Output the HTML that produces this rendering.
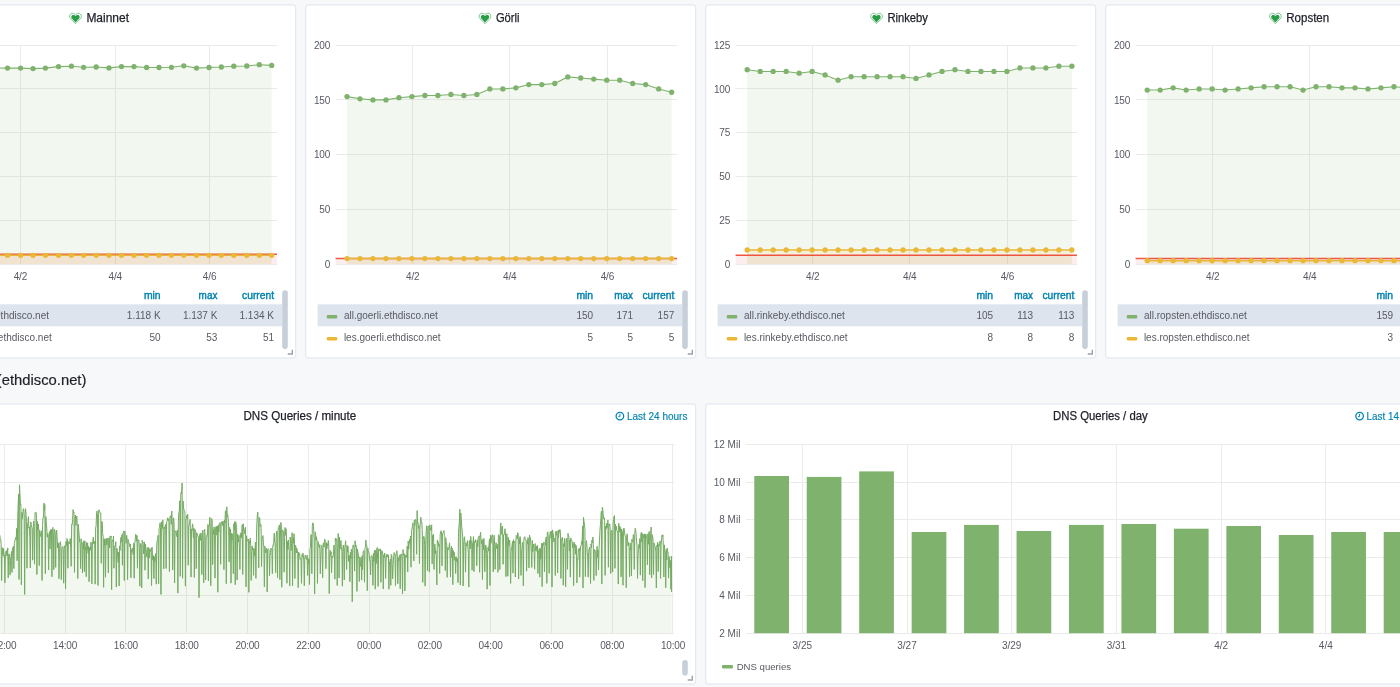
<!DOCTYPE html>
<html><head><meta charset="utf-8"><style>
html,body{margin:0;padding:0}
body{width:1400px;height:687px;overflow:hidden;background:#f7f8fa;position:relative;font-family:"Liberation Sans",sans-serif}
.p{position:absolute;background:#fff;border:1px solid #dde4ed;border-radius:3px;box-sizing:border-box;transform:translate(0.2px,0.5px)}
svg{position:absolute;left:0;top:0;font-family:"Liberation Sans",sans-serif;will-change:transform}
</style></head><body>
<div class="p" style="left:-95px;top:4px;width:391px;height:354px"></div>
<div class="p" style="left:305px;top:4px;width:391px;height:354px"></div>
<div class="p" style="left:705px;top:4px;width:391px;height:354px"></div>
<div class="p" style="left:1105px;top:4px;width:391px;height:354px"></div>
<div class="p" style="left:-95px;top:403px;width:791px;height:281px"></div>
<div class="p" style="left:705px;top:403px;width:791px;height:281px"></div>
<svg width="1400" height="687" viewBox="0 0 1400 687">
<line x1="-56" y1="264.5" x2="277" y2="264.5" stroke="#ebebeb" stroke-width="1"/>
<line x1="-56" y1="220.5" x2="277" y2="220.5" stroke="#ebebeb" stroke-width="1"/>
<line x1="-56" y1="176.5" x2="277" y2="176.5" stroke="#ebebeb" stroke-width="1"/>
<line x1="-56" y1="132.5" x2="277" y2="132.5" stroke="#ebebeb" stroke-width="1"/>
<line x1="-56" y1="88.5" x2="277" y2="88.5" stroke="#ebebeb" stroke-width="1"/>
<line x1="-56" y1="45.5" x2="277" y2="45.5" stroke="#ebebeb" stroke-width="1"/>
<line x1="20.5" y1="45.2" x2="20.5" y2="264" stroke="#ebebeb" stroke-width="1"/>
<line x1="115.5" y1="45.2" x2="115.5" y2="264" stroke="#ebebeb" stroke-width="1"/>
<line x1="209.5" y1="45.2" x2="209.5" y2="264" stroke="#ebebeb" stroke-width="1"/>
<rect x="-56" y="254.2" width="333" height="9.8" fill="rgba(234,112,112,0.12)"/>
<path d="M-42.8,68 L-30.22,68.4 L-17.64,67.6 L-5.06,68 L7.5,68.1 L20.6,68.1 L33,68.6 L45.4,68.1 L58.5,66.6 L71.4,66.2 L83.6,67.3 L96.2,67 L109,67.9 L121.5,66.6 L134,66.6 L146.6,67.5 L159,67.5 L171.4,67.3 L183.8,65.8 L196.5,68.1 L209,67.5 L221.3,67 L233.8,66.2 L246.8,66 L259.3,64.7 L271.7,65.4 L271.7,264 L-42.8,264 Z" fill="#7eb26d" fill-opacity="0.1"/>
<rect x="-42.8" y="255.3" width="314.5" height="8.7" fill="#eab839" fill-opacity="0.1"/>
<line x1="-56" y1="254.2" x2="277" y2="254.2" stroke="rgba(237,46,24,0.8)" stroke-width="1.6"/>
<path d="M-42.8,68 L-30.22,68.4 L-17.64,67.6 L-5.06,68 L7.5,68.1 L20.6,68.1 L33,68.6 L45.4,68.1 L58.5,66.6 L71.4,66.2 L83.6,67.3 L96.2,67 L109,67.9 L121.5,66.6 L134,66.6 L146.6,67.5 L159,67.5 L171.4,67.3 L183.8,65.8 L196.5,68.1 L209,67.5 L221.3,67 L233.8,66.2 L246.8,66 L259.3,64.7 L271.7,65.4" fill="none" stroke="#7eb26d" stroke-width="1.1"/>
<circle cx="-42.8" cy="68" r="2.65" fill="#7eb26d"/>
<circle cx="-30.22" cy="68.4" r="2.65" fill="#7eb26d"/>
<circle cx="-17.64" cy="67.6" r="2.65" fill="#7eb26d"/>
<circle cx="-5.06" cy="68" r="2.65" fill="#7eb26d"/>
<circle cx="7.5" cy="68.1" r="2.65" fill="#7eb26d"/>
<circle cx="20.6" cy="68.1" r="2.65" fill="#7eb26d"/>
<circle cx="33" cy="68.6" r="2.65" fill="#7eb26d"/>
<circle cx="45.4" cy="68.1" r="2.65" fill="#7eb26d"/>
<circle cx="58.5" cy="66.6" r="2.65" fill="#7eb26d"/>
<circle cx="71.4" cy="66.2" r="2.65" fill="#7eb26d"/>
<circle cx="83.6" cy="67.3" r="2.65" fill="#7eb26d"/>
<circle cx="96.2" cy="67" r="2.65" fill="#7eb26d"/>
<circle cx="109" cy="67.9" r="2.65" fill="#7eb26d"/>
<circle cx="121.5" cy="66.6" r="2.65" fill="#7eb26d"/>
<circle cx="134" cy="66.6" r="2.65" fill="#7eb26d"/>
<circle cx="146.6" cy="67.5" r="2.65" fill="#7eb26d"/>
<circle cx="159" cy="67.5" r="2.65" fill="#7eb26d"/>
<circle cx="171.4" cy="67.3" r="2.65" fill="#7eb26d"/>
<circle cx="183.8" cy="65.8" r="2.65" fill="#7eb26d"/>
<circle cx="196.5" cy="68.1" r="2.65" fill="#7eb26d"/>
<circle cx="209" cy="67.5" r="2.65" fill="#7eb26d"/>
<circle cx="221.3" cy="67" r="2.65" fill="#7eb26d"/>
<circle cx="233.8" cy="66.2" r="2.65" fill="#7eb26d"/>
<circle cx="246.8" cy="66" r="2.65" fill="#7eb26d"/>
<circle cx="259.3" cy="64.7" r="2.65" fill="#7eb26d"/>
<circle cx="271.7" cy="65.4" r="2.65" fill="#7eb26d"/>
<line x1="-42.8" y1="255.3" x2="271.7" y2="255.3" stroke="#eab839" stroke-width="1.4"/>
<circle cx="-42.8" cy="255.3" r="2.65" fill="#eab839"/>
<circle cx="-30.22" cy="255.3" r="2.65" fill="#eab839"/>
<circle cx="-17.64" cy="255.3" r="2.65" fill="#eab839"/>
<circle cx="-5.06" cy="255.3" r="2.65" fill="#eab839"/>
<circle cx="7.5" cy="255.3" r="2.65" fill="#eab839"/>
<circle cx="20.6" cy="255.3" r="2.65" fill="#eab839"/>
<circle cx="33" cy="255.3" r="2.65" fill="#eab839"/>
<circle cx="45.4" cy="255.3" r="2.65" fill="#eab839"/>
<circle cx="58.5" cy="255.3" r="2.65" fill="#eab839"/>
<circle cx="71.4" cy="255.3" r="2.65" fill="#eab839"/>
<circle cx="83.6" cy="255.3" r="2.65" fill="#eab839"/>
<circle cx="96.2" cy="255.3" r="2.65" fill="#eab839"/>
<circle cx="109" cy="255.3" r="2.65" fill="#eab839"/>
<circle cx="121.5" cy="255.3" r="2.65" fill="#eab839"/>
<circle cx="134" cy="255.3" r="2.65" fill="#eab839"/>
<circle cx="146.6" cy="255.3" r="2.65" fill="#eab839"/>
<circle cx="159" cy="255.3" r="2.65" fill="#eab839"/>
<circle cx="171.4" cy="255.3" r="2.65" fill="#eab839"/>
<circle cx="183.8" cy="255.3" r="2.65" fill="#eab839"/>
<circle cx="196.5" cy="255.3" r="2.65" fill="#eab839"/>
<circle cx="209" cy="255.3" r="2.65" fill="#eab839"/>
<circle cx="221.3" cy="255.3" r="2.65" fill="#eab839"/>
<circle cx="233.8" cy="255.3" r="2.65" fill="#eab839"/>
<circle cx="246.8" cy="255.3" r="2.65" fill="#eab839"/>
<circle cx="259.3" cy="255.3" r="2.65" fill="#eab839"/>
<circle cx="271.7" cy="255.3" r="2.65" fill="#eab839"/>
<text x="-69.8" y="267.6" font-size="10" text-anchor="end" fill="#585a62" font-weight="400" letter-spacing="-0.15">0</text>
<text x="-69.8" y="223.84" font-size="10" text-anchor="end" fill="#585a62" font-weight="400" letter-spacing="-0.15">250</text>
<text x="-69.8" y="180.08" font-size="10" text-anchor="end" fill="#585a62" font-weight="400" letter-spacing="-0.15">500</text>
<text x="-69.8" y="136.32" font-size="10" text-anchor="end" fill="#585a62" font-weight="400" letter-spacing="-0.15">750</text>
<text x="-69.8" y="92.56" font-size="10" text-anchor="end" fill="#585a62" font-weight="400" letter-spacing="-0.15">1.00 K</text>
<text x="-69.8" y="48.8" font-size="10" text-anchor="end" fill="#585a62" font-weight="400" letter-spacing="-0.15">1.25 K</text>
<text x="20.4" y="279.5" font-size="10" text-anchor="middle" fill="#585a62" font-weight="400" letter-spacing="-0.15">4/2</text>
<text x="115.3" y="279.5" font-size="10" text-anchor="middle" fill="#585a62" font-weight="400" letter-spacing="-0.15">4/4</text>
<text x="209.6" y="279.5" font-size="10" text-anchor="middle" fill="#585a62" font-weight="400" letter-spacing="-0.15">4/6</text>
<rect x="-82.4" y="304.3" width="364.4" height="22" fill="#dde4ed"/>
<text x="160.6" y="298.7" font-size="10" text-anchor="end" fill="#0083b3" stroke="#0083b3" stroke-width="0.4" textLength="16.7" lengthAdjust="spacingAndGlyphs">min</text>
<text x="217.4" y="298.7" font-size="10" text-anchor="end" fill="#0083b3" stroke="#0083b3" stroke-width="0.4" textLength="18.8" lengthAdjust="spacingAndGlyphs">max</text>
<text x="274" y="298.7" font-size="10" text-anchor="end" fill="#0083b3" stroke="#0083b3" stroke-width="0.4" textLength="31.9" lengthAdjust="spacingAndGlyphs">current</text>
<rect x="-73.2" y="315" width="10.4" height="3.4" rx="1" fill="#7eb26d"/>
<text x="-56.1" y="318.6" font-size="10" text-anchor="start" fill="#585a62" font-weight="400">all.mainnet.ethdisco.net</text>
<text x="160.6" y="318.6" font-size="10" text-anchor="end" fill="#585a62" font-weight="400">1.118 K</text>
<text x="217.4" y="318.6" font-size="10" text-anchor="end" fill="#585a62" font-weight="400">1.137 K</text>
<text x="274" y="318.6" font-size="10" text-anchor="end" fill="#585a62" font-weight="400">1.134 K</text>
<rect x="-73.2" y="337" width="10.4" height="3.4" rx="1" fill="#eab839"/>
<text x="-56.1" y="340.6" font-size="10" text-anchor="start" fill="#585a62" font-weight="400">les.mainnet.ethdisco.net</text>
<text x="160.6" y="340.6" font-size="10" text-anchor="end" fill="#585a62" font-weight="400">50</text>
<text x="217.4" y="340.6" font-size="10" text-anchor="end" fill="#585a62" font-weight="400">53</text>
<text x="274" y="340.6" font-size="10" text-anchor="end" fill="#585a62" font-weight="400">51</text>
<rect x="282.2" y="290.3" width="5.6" height="58.7" rx="2.8" fill="#c7d0d9"/>
<path d="M291.6,349.8 h1.4 v4.9 h-5.3 v-1.4 h3.9 Z" fill="#9aa3ad"/>
<line x1="335.6" y1="264.5" x2="677" y2="264.5" stroke="#ebebeb" stroke-width="1"/>
<line x1="335.6" y1="209.5" x2="677" y2="209.5" stroke="#ebebeb" stroke-width="1"/>
<line x1="335.6" y1="154.5" x2="677" y2="154.5" stroke="#ebebeb" stroke-width="1"/>
<line x1="335.6" y1="99.5" x2="677" y2="99.5" stroke="#ebebeb" stroke-width="1"/>
<line x1="335.6" y1="45.5" x2="677" y2="45.5" stroke="#ebebeb" stroke-width="1"/>
<line x1="412.5" y1="45.2" x2="412.5" y2="264" stroke="#ebebeb" stroke-width="1"/>
<line x1="509.5" y1="45.2" x2="509.5" y2="264" stroke="#ebebeb" stroke-width="1"/>
<line x1="607.5" y1="45.2" x2="607.5" y2="264" stroke="#ebebeb" stroke-width="1"/>
<rect x="335.6" y="258.53" width="341.4" height="5.47" fill="rgba(234,112,112,0.12)"/>
<path d="M347,96.62 L359.99,98.81 L372.97,99.9 L385.96,99.9 L398.95,97.71 L411.94,96.62 L424.92,95.52 L437.91,95.52 L450.9,94.43 L463.88,95.52 L476.87,94.43 L489.86,88.96 L502.84,88.96 L515.83,87.87 L528.82,84.58 L541.81,84.58 L554.79,83.49 L567.78,76.93 L580.77,78.02 L593.75,79.11 L606.74,80.21 L619.73,80.21 L632.71,83.49 L645.7,84.58 L658.69,88.96 L671.67,92.24 L671.67,264 L347,264 Z" fill="#7eb26d" fill-opacity="0.1"/>
<rect x="347" y="258.53" width="324.67" height="5.47" fill="#eab839" fill-opacity="0.1"/>
<line x1="335.6" y1="258.53" x2="677" y2="258.53" stroke="rgba(237,46,24,0.8)" stroke-width="1.6"/>
<path d="M347,96.62 L359.99,98.81 L372.97,99.9 L385.96,99.9 L398.95,97.71 L411.94,96.62 L424.92,95.52 L437.91,95.52 L450.9,94.43 L463.88,95.52 L476.87,94.43 L489.86,88.96 L502.84,88.96 L515.83,87.87 L528.82,84.58 L541.81,84.58 L554.79,83.49 L567.78,76.93 L580.77,78.02 L593.75,79.11 L606.74,80.21 L619.73,80.21 L632.71,83.49 L645.7,84.58 L658.69,88.96 L671.67,92.24" fill="none" stroke="#7eb26d" stroke-width="1.1"/>
<circle cx="347" cy="96.62" r="2.65" fill="#7eb26d"/>
<circle cx="359.99" cy="98.81" r="2.65" fill="#7eb26d"/>
<circle cx="372.97" cy="99.9" r="2.65" fill="#7eb26d"/>
<circle cx="385.96" cy="99.9" r="2.65" fill="#7eb26d"/>
<circle cx="398.95" cy="97.71" r="2.65" fill="#7eb26d"/>
<circle cx="411.94" cy="96.62" r="2.65" fill="#7eb26d"/>
<circle cx="424.92" cy="95.52" r="2.65" fill="#7eb26d"/>
<circle cx="437.91" cy="95.52" r="2.65" fill="#7eb26d"/>
<circle cx="450.9" cy="94.43" r="2.65" fill="#7eb26d"/>
<circle cx="463.88" cy="95.52" r="2.65" fill="#7eb26d"/>
<circle cx="476.87" cy="94.43" r="2.65" fill="#7eb26d"/>
<circle cx="489.86" cy="88.96" r="2.65" fill="#7eb26d"/>
<circle cx="502.84" cy="88.96" r="2.65" fill="#7eb26d"/>
<circle cx="515.83" cy="87.87" r="2.65" fill="#7eb26d"/>
<circle cx="528.82" cy="84.58" r="2.65" fill="#7eb26d"/>
<circle cx="541.81" cy="84.58" r="2.65" fill="#7eb26d"/>
<circle cx="554.79" cy="83.49" r="2.65" fill="#7eb26d"/>
<circle cx="567.78" cy="76.93" r="2.65" fill="#7eb26d"/>
<circle cx="580.77" cy="78.02" r="2.65" fill="#7eb26d"/>
<circle cx="593.75" cy="79.11" r="2.65" fill="#7eb26d"/>
<circle cx="606.74" cy="80.21" r="2.65" fill="#7eb26d"/>
<circle cx="619.73" cy="80.21" r="2.65" fill="#7eb26d"/>
<circle cx="632.71" cy="83.49" r="2.65" fill="#7eb26d"/>
<circle cx="645.7" cy="84.58" r="2.65" fill="#7eb26d"/>
<circle cx="658.69" cy="88.96" r="2.65" fill="#7eb26d"/>
<circle cx="671.67" cy="92.24" r="2.65" fill="#7eb26d"/>
<line x1="347" y1="258.53" x2="671.67" y2="258.53" stroke="#eab839" stroke-width="1.4"/>
<circle cx="347" cy="258.53" r="2.65" fill="#eab839"/>
<circle cx="359.99" cy="258.53" r="2.65" fill="#eab839"/>
<circle cx="372.97" cy="258.53" r="2.65" fill="#eab839"/>
<circle cx="385.96" cy="258.53" r="2.65" fill="#eab839"/>
<circle cx="398.95" cy="258.53" r="2.65" fill="#eab839"/>
<circle cx="411.94" cy="258.53" r="2.65" fill="#eab839"/>
<circle cx="424.92" cy="258.53" r="2.65" fill="#eab839"/>
<circle cx="437.91" cy="258.53" r="2.65" fill="#eab839"/>
<circle cx="450.9" cy="258.53" r="2.65" fill="#eab839"/>
<circle cx="463.88" cy="258.53" r="2.65" fill="#eab839"/>
<circle cx="476.87" cy="258.53" r="2.65" fill="#eab839"/>
<circle cx="489.86" cy="258.53" r="2.65" fill="#eab839"/>
<circle cx="502.84" cy="258.53" r="2.65" fill="#eab839"/>
<circle cx="515.83" cy="258.53" r="2.65" fill="#eab839"/>
<circle cx="528.82" cy="258.53" r="2.65" fill="#eab839"/>
<circle cx="541.81" cy="258.53" r="2.65" fill="#eab839"/>
<circle cx="554.79" cy="258.53" r="2.65" fill="#eab839"/>
<circle cx="567.78" cy="258.53" r="2.65" fill="#eab839"/>
<circle cx="580.77" cy="258.53" r="2.65" fill="#eab839"/>
<circle cx="593.75" cy="258.53" r="2.65" fill="#eab839"/>
<circle cx="606.74" cy="258.53" r="2.65" fill="#eab839"/>
<circle cx="619.73" cy="258.53" r="2.65" fill="#eab839"/>
<circle cx="632.71" cy="258.53" r="2.65" fill="#eab839"/>
<circle cx="645.7" cy="258.53" r="2.65" fill="#eab839"/>
<circle cx="658.69" cy="258.53" r="2.65" fill="#eab839"/>
<circle cx="671.67" cy="258.53" r="2.65" fill="#eab839"/>
<text x="330.2" y="267.6" font-size="10" text-anchor="end" fill="#585a62" font-weight="400" letter-spacing="-0.15">0</text>
<text x="330.2" y="212.9" font-size="10" text-anchor="end" fill="#585a62" font-weight="400" letter-spacing="-0.15">50</text>
<text x="330.2" y="158.2" font-size="10" text-anchor="end" fill="#585a62" font-weight="400" letter-spacing="-0.15">100</text>
<text x="330.2" y="103.5" font-size="10" text-anchor="end" fill="#585a62" font-weight="400" letter-spacing="-0.15">150</text>
<text x="330.2" y="48.8" font-size="10" text-anchor="end" fill="#585a62" font-weight="400" letter-spacing="-0.15">200</text>
<text x="412.7" y="279.5" font-size="10" text-anchor="middle" fill="#585a62" font-weight="400" letter-spacing="-0.15">4/2</text>
<text x="509.8" y="279.5" font-size="10" text-anchor="middle" fill="#585a62" font-weight="400" letter-spacing="-0.15">4/4</text>
<text x="607.4" y="279.5" font-size="10" text-anchor="middle" fill="#585a62" font-weight="400" letter-spacing="-0.15">4/6</text>
<rect x="317.6" y="304.3" width="364.4" height="22" fill="#dde4ed"/>
<text x="593.1" y="298.7" font-size="10" text-anchor="end" fill="#0083b3" stroke="#0083b3" stroke-width="0.4" textLength="16.7" lengthAdjust="spacingAndGlyphs">min</text>
<text x="633.1" y="298.7" font-size="10" text-anchor="end" fill="#0083b3" stroke="#0083b3" stroke-width="0.4" textLength="18.8" lengthAdjust="spacingAndGlyphs">max</text>
<text x="674.3" y="298.7" font-size="10" text-anchor="end" fill="#0083b3" stroke="#0083b3" stroke-width="0.4" textLength="31.9" lengthAdjust="spacingAndGlyphs">current</text>
<rect x="326.8" y="315" width="10.4" height="3.4" rx="1" fill="#7eb26d"/>
<text x="343.9" y="318.6" font-size="10" text-anchor="start" fill="#585a62" font-weight="400">all.goerli.ethdisco.net</text>
<text x="593.1" y="318.6" font-size="10" text-anchor="end" fill="#585a62" font-weight="400">150</text>
<text x="633.1" y="318.6" font-size="10" text-anchor="end" fill="#585a62" font-weight="400">171</text>
<text x="674.3" y="318.6" font-size="10" text-anchor="end" fill="#585a62" font-weight="400">157</text>
<rect x="326.8" y="337" width="10.4" height="3.4" rx="1" fill="#eab839"/>
<text x="343.9" y="340.6" font-size="10" text-anchor="start" fill="#585a62" font-weight="400">les.goerli.ethdisco.net</text>
<text x="593.1" y="340.6" font-size="10" text-anchor="end" fill="#585a62" font-weight="400">5</text>
<text x="633.1" y="340.6" font-size="10" text-anchor="end" fill="#585a62" font-weight="400">5</text>
<text x="674.3" y="340.6" font-size="10" text-anchor="end" fill="#585a62" font-weight="400">5</text>
<rect x="682.2" y="290.3" width="5.6" height="58.7" rx="2.8" fill="#c7d0d9"/>
<path d="M691.6,349.8 h1.4 v4.9 h-5.3 v-1.4 h3.9 Z" fill="#9aa3ad"/>
<line x1="735.6" y1="264.5" x2="1077" y2="264.5" stroke="#ebebeb" stroke-width="1"/>
<line x1="735.6" y1="220.5" x2="1077" y2="220.5" stroke="#ebebeb" stroke-width="1"/>
<line x1="735.6" y1="176.5" x2="1077" y2="176.5" stroke="#ebebeb" stroke-width="1"/>
<line x1="735.6" y1="132.5" x2="1077" y2="132.5" stroke="#ebebeb" stroke-width="1"/>
<line x1="735.6" y1="88.5" x2="1077" y2="88.5" stroke="#ebebeb" stroke-width="1"/>
<line x1="735.6" y1="45.5" x2="1077" y2="45.5" stroke="#ebebeb" stroke-width="1"/>
<line x1="812.5" y1="45.2" x2="812.5" y2="264" stroke="#ebebeb" stroke-width="1"/>
<line x1="909.5" y1="45.2" x2="909.5" y2="264" stroke="#ebebeb" stroke-width="1"/>
<line x1="1007.5" y1="45.2" x2="1007.5" y2="264" stroke="#ebebeb" stroke-width="1"/>
<rect x="735.6" y="255.25" width="341.4" height="8.75" fill="rgba(234,112,112,0.12)"/>
<path d="M747.2,69.71 L760.19,71.46 L773.17,71.46 L786.16,71.46 L799.15,73.21 L812.13,71.46 L825.12,74.96 L838.11,80.21 L851.1,76.71 L864.08,76.71 L877.07,76.71 L890.06,76.71 L903.04,76.71 L916.03,78.46 L929.02,74.96 L942.01,71.46 L954.99,69.71 L967.98,71.46 L980.97,71.46 L993.95,71.46 L1006.94,71.46 L1019.93,67.96 L1032.91,67.96 L1045.9,67.96 L1058.89,66.2 L1071.88,66.2 L1071.88,264 L747.2,264 Z" fill="#7eb26d" fill-opacity="0.1"/>
<rect x="747.2" y="250" width="324.67" height="14" fill="#eab839" fill-opacity="0.1"/>
<line x1="735.6" y1="255.25" x2="1077" y2="255.25" stroke="rgba(237,46,24,0.8)" stroke-width="1.6"/>
<path d="M747.2,69.71 L760.19,71.46 L773.17,71.46 L786.16,71.46 L799.15,73.21 L812.13,71.46 L825.12,74.96 L838.11,80.21 L851.1,76.71 L864.08,76.71 L877.07,76.71 L890.06,76.71 L903.04,76.71 L916.03,78.46 L929.02,74.96 L942.01,71.46 L954.99,69.71 L967.98,71.46 L980.97,71.46 L993.95,71.46 L1006.94,71.46 L1019.93,67.96 L1032.91,67.96 L1045.9,67.96 L1058.89,66.2 L1071.88,66.2" fill="none" stroke="#7eb26d" stroke-width="1.1"/>
<circle cx="747.2" cy="69.71" r="2.65" fill="#7eb26d"/>
<circle cx="760.19" cy="71.46" r="2.65" fill="#7eb26d"/>
<circle cx="773.17" cy="71.46" r="2.65" fill="#7eb26d"/>
<circle cx="786.16" cy="71.46" r="2.65" fill="#7eb26d"/>
<circle cx="799.15" cy="73.21" r="2.65" fill="#7eb26d"/>
<circle cx="812.13" cy="71.46" r="2.65" fill="#7eb26d"/>
<circle cx="825.12" cy="74.96" r="2.65" fill="#7eb26d"/>
<circle cx="838.11" cy="80.21" r="2.65" fill="#7eb26d"/>
<circle cx="851.1" cy="76.71" r="2.65" fill="#7eb26d"/>
<circle cx="864.08" cy="76.71" r="2.65" fill="#7eb26d"/>
<circle cx="877.07" cy="76.71" r="2.65" fill="#7eb26d"/>
<circle cx="890.06" cy="76.71" r="2.65" fill="#7eb26d"/>
<circle cx="903.04" cy="76.71" r="2.65" fill="#7eb26d"/>
<circle cx="916.03" cy="78.46" r="2.65" fill="#7eb26d"/>
<circle cx="929.02" cy="74.96" r="2.65" fill="#7eb26d"/>
<circle cx="942.01" cy="71.46" r="2.65" fill="#7eb26d"/>
<circle cx="954.99" cy="69.71" r="2.65" fill="#7eb26d"/>
<circle cx="967.98" cy="71.46" r="2.65" fill="#7eb26d"/>
<circle cx="980.97" cy="71.46" r="2.65" fill="#7eb26d"/>
<circle cx="993.95" cy="71.46" r="2.65" fill="#7eb26d"/>
<circle cx="1006.94" cy="71.46" r="2.65" fill="#7eb26d"/>
<circle cx="1019.93" cy="67.96" r="2.65" fill="#7eb26d"/>
<circle cx="1032.91" cy="67.96" r="2.65" fill="#7eb26d"/>
<circle cx="1045.9" cy="67.96" r="2.65" fill="#7eb26d"/>
<circle cx="1058.89" cy="66.2" r="2.65" fill="#7eb26d"/>
<circle cx="1071.88" cy="66.2" r="2.65" fill="#7eb26d"/>
<line x1="747.2" y1="250" x2="1071.88" y2="250" stroke="#eab839" stroke-width="1.4"/>
<circle cx="747.2" cy="250" r="2.65" fill="#eab839"/>
<circle cx="760.19" cy="250" r="2.65" fill="#eab839"/>
<circle cx="773.17" cy="250" r="2.65" fill="#eab839"/>
<circle cx="786.16" cy="250" r="2.65" fill="#eab839"/>
<circle cx="799.15" cy="250" r="2.65" fill="#eab839"/>
<circle cx="812.13" cy="250" r="2.65" fill="#eab839"/>
<circle cx="825.12" cy="250" r="2.65" fill="#eab839"/>
<circle cx="838.11" cy="250" r="2.65" fill="#eab839"/>
<circle cx="851.1" cy="250" r="2.65" fill="#eab839"/>
<circle cx="864.08" cy="250" r="2.65" fill="#eab839"/>
<circle cx="877.07" cy="250" r="2.65" fill="#eab839"/>
<circle cx="890.06" cy="250" r="2.65" fill="#eab839"/>
<circle cx="903.04" cy="250" r="2.65" fill="#eab839"/>
<circle cx="916.03" cy="250" r="2.65" fill="#eab839"/>
<circle cx="929.02" cy="250" r="2.65" fill="#eab839"/>
<circle cx="942.01" cy="250" r="2.65" fill="#eab839"/>
<circle cx="954.99" cy="250" r="2.65" fill="#eab839"/>
<circle cx="967.98" cy="250" r="2.65" fill="#eab839"/>
<circle cx="980.97" cy="250" r="2.65" fill="#eab839"/>
<circle cx="993.95" cy="250" r="2.65" fill="#eab839"/>
<circle cx="1006.94" cy="250" r="2.65" fill="#eab839"/>
<circle cx="1019.93" cy="250" r="2.65" fill="#eab839"/>
<circle cx="1032.91" cy="250" r="2.65" fill="#eab839"/>
<circle cx="1045.9" cy="250" r="2.65" fill="#eab839"/>
<circle cx="1058.89" cy="250" r="2.65" fill="#eab839"/>
<circle cx="1071.88" cy="250" r="2.65" fill="#eab839"/>
<text x="730.2" y="267.6" font-size="10" text-anchor="end" fill="#585a62" font-weight="400" letter-spacing="-0.15">0</text>
<text x="730.2" y="223.84" font-size="10" text-anchor="end" fill="#585a62" font-weight="400" letter-spacing="-0.15">25</text>
<text x="730.2" y="180.08" font-size="10" text-anchor="end" fill="#585a62" font-weight="400" letter-spacing="-0.15">50</text>
<text x="730.2" y="136.32" font-size="10" text-anchor="end" fill="#585a62" font-weight="400" letter-spacing="-0.15">75</text>
<text x="730.2" y="92.56" font-size="10" text-anchor="end" fill="#585a62" font-weight="400" letter-spacing="-0.15">100</text>
<text x="730.2" y="48.8" font-size="10" text-anchor="end" fill="#585a62" font-weight="400" letter-spacing="-0.15">125</text>
<text x="812.7" y="279.5" font-size="10" text-anchor="middle" fill="#585a62" font-weight="400" letter-spacing="-0.15">4/2</text>
<text x="909.8" y="279.5" font-size="10" text-anchor="middle" fill="#585a62" font-weight="400" letter-spacing="-0.15">4/4</text>
<text x="1007.4" y="279.5" font-size="10" text-anchor="middle" fill="#585a62" font-weight="400" letter-spacing="-0.15">4/6</text>
<rect x="717.6" y="304.3" width="364.4" height="22" fill="#dde4ed"/>
<text x="993.1" y="298.7" font-size="10" text-anchor="end" fill="#0083b3" stroke="#0083b3" stroke-width="0.4" textLength="16.7" lengthAdjust="spacingAndGlyphs">min</text>
<text x="1033.1" y="298.7" font-size="10" text-anchor="end" fill="#0083b3" stroke="#0083b3" stroke-width="0.4" textLength="18.8" lengthAdjust="spacingAndGlyphs">max</text>
<text x="1074.3" y="298.7" font-size="10" text-anchor="end" fill="#0083b3" stroke="#0083b3" stroke-width="0.4" textLength="31.9" lengthAdjust="spacingAndGlyphs">current</text>
<rect x="726.8" y="315" width="10.4" height="3.4" rx="1" fill="#7eb26d"/>
<text x="743.9" y="318.6" font-size="10" text-anchor="start" fill="#585a62" font-weight="400">all.rinkeby.ethdisco.net</text>
<text x="993.1" y="318.6" font-size="10" text-anchor="end" fill="#585a62" font-weight="400">105</text>
<text x="1033.1" y="318.6" font-size="10" text-anchor="end" fill="#585a62" font-weight="400">113</text>
<text x="1074.3" y="318.6" font-size="10" text-anchor="end" fill="#585a62" font-weight="400">113</text>
<rect x="726.8" y="337" width="10.4" height="3.4" rx="1" fill="#eab839"/>
<text x="743.9" y="340.6" font-size="10" text-anchor="start" fill="#585a62" font-weight="400">les.rinkeby.ethdisco.net</text>
<text x="993.1" y="340.6" font-size="10" text-anchor="end" fill="#585a62" font-weight="400">8</text>
<text x="1033.1" y="340.6" font-size="10" text-anchor="end" fill="#585a62" font-weight="400">8</text>
<text x="1074.3" y="340.6" font-size="10" text-anchor="end" fill="#585a62" font-weight="400">8</text>
<rect x="1082.2" y="290.3" width="5.6" height="58.7" rx="2.8" fill="#c7d0d9"/>
<path d="M1091.6,349.8 h1.4 v4.9 h-5.3 v-1.4 h3.9 Z" fill="#9aa3ad"/>
<line x1="1135.6" y1="264.5" x2="1477" y2="264.5" stroke="#ebebeb" stroke-width="1"/>
<line x1="1135.6" y1="209.5" x2="1477" y2="209.5" stroke="#ebebeb" stroke-width="1"/>
<line x1="1135.6" y1="154.5" x2="1477" y2="154.5" stroke="#ebebeb" stroke-width="1"/>
<line x1="1135.6" y1="99.5" x2="1477" y2="99.5" stroke="#ebebeb" stroke-width="1"/>
<line x1="1135.6" y1="45.5" x2="1477" y2="45.5" stroke="#ebebeb" stroke-width="1"/>
<line x1="1212.5" y1="45.2" x2="1212.5" y2="264" stroke="#ebebeb" stroke-width="1"/>
<line x1="1309.5" y1="45.2" x2="1309.5" y2="264" stroke="#ebebeb" stroke-width="1"/>
<line x1="1407.5" y1="45.2" x2="1407.5" y2="264" stroke="#ebebeb" stroke-width="1"/>
<rect x="1135.6" y="258.53" width="341.4" height="5.47" fill="rgba(234,112,112,0.12)"/>
<path d="M1147.2,90.05 L1160.19,90.05 L1173.17,87.87 L1186.16,90.05 L1199.15,88.96 L1212.13,88.96 L1225.12,90.05 L1238.11,88.96 L1251.1,87.87 L1264.08,86.77 L1277.07,86.77 L1290.06,86.77 L1303.04,90.05 L1316.03,86.77 L1329.02,86.77 L1342.01,87.87 L1354.99,87.87 L1367.98,88.96 L1380.97,87.87 L1393.95,86.77 L1406.94,87.87 L1419.93,86.77 L1432.91,85.68 L1445.9,86.77 L1458.89,86.77 L1471.88,87.87 L1471.88,264 L1147.2,264 Z" fill="#7eb26d" fill-opacity="0.1"/>
<rect x="1147.2" y="260.72" width="324.67" height="3.28" fill="#eab839" fill-opacity="0.1"/>
<line x1="1135.6" y1="258.53" x2="1477" y2="258.53" stroke="rgba(237,46,24,0.8)" stroke-width="1.6"/>
<path d="M1147.2,90.05 L1160.19,90.05 L1173.17,87.87 L1186.16,90.05 L1199.15,88.96 L1212.13,88.96 L1225.12,90.05 L1238.11,88.96 L1251.1,87.87 L1264.08,86.77 L1277.07,86.77 L1290.06,86.77 L1303.04,90.05 L1316.03,86.77 L1329.02,86.77 L1342.01,87.87 L1354.99,87.87 L1367.98,88.96 L1380.97,87.87 L1393.95,86.77 L1406.94,87.87 L1419.93,86.77 L1432.91,85.68 L1445.9,86.77 L1458.89,86.77 L1471.88,87.87" fill="none" stroke="#7eb26d" stroke-width="1.1"/>
<circle cx="1147.2" cy="90.05" r="2.65" fill="#7eb26d"/>
<circle cx="1160.19" cy="90.05" r="2.65" fill="#7eb26d"/>
<circle cx="1173.17" cy="87.87" r="2.65" fill="#7eb26d"/>
<circle cx="1186.16" cy="90.05" r="2.65" fill="#7eb26d"/>
<circle cx="1199.15" cy="88.96" r="2.65" fill="#7eb26d"/>
<circle cx="1212.13" cy="88.96" r="2.65" fill="#7eb26d"/>
<circle cx="1225.12" cy="90.05" r="2.65" fill="#7eb26d"/>
<circle cx="1238.11" cy="88.96" r="2.65" fill="#7eb26d"/>
<circle cx="1251.1" cy="87.87" r="2.65" fill="#7eb26d"/>
<circle cx="1264.08" cy="86.77" r="2.65" fill="#7eb26d"/>
<circle cx="1277.07" cy="86.77" r="2.65" fill="#7eb26d"/>
<circle cx="1290.06" cy="86.77" r="2.65" fill="#7eb26d"/>
<circle cx="1303.04" cy="90.05" r="2.65" fill="#7eb26d"/>
<circle cx="1316.03" cy="86.77" r="2.65" fill="#7eb26d"/>
<circle cx="1329.02" cy="86.77" r="2.65" fill="#7eb26d"/>
<circle cx="1342.01" cy="87.87" r="2.65" fill="#7eb26d"/>
<circle cx="1354.99" cy="87.87" r="2.65" fill="#7eb26d"/>
<circle cx="1367.98" cy="88.96" r="2.65" fill="#7eb26d"/>
<circle cx="1380.97" cy="87.87" r="2.65" fill="#7eb26d"/>
<circle cx="1393.95" cy="86.77" r="2.65" fill="#7eb26d"/>
<circle cx="1406.94" cy="87.87" r="2.65" fill="#7eb26d"/>
<circle cx="1419.93" cy="86.77" r="2.65" fill="#7eb26d"/>
<circle cx="1432.91" cy="85.68" r="2.65" fill="#7eb26d"/>
<circle cx="1445.9" cy="86.77" r="2.65" fill="#7eb26d"/>
<circle cx="1458.89" cy="86.77" r="2.65" fill="#7eb26d"/>
<circle cx="1471.88" cy="87.87" r="2.65" fill="#7eb26d"/>
<line x1="1147.2" y1="260.72" x2="1471.88" y2="260.72" stroke="#eab839" stroke-width="1.4"/>
<circle cx="1147.2" cy="260.72" r="2.65" fill="#eab839"/>
<circle cx="1160.19" cy="260.72" r="2.65" fill="#eab839"/>
<circle cx="1173.17" cy="260.72" r="2.65" fill="#eab839"/>
<circle cx="1186.16" cy="260.72" r="2.65" fill="#eab839"/>
<circle cx="1199.15" cy="260.72" r="2.65" fill="#eab839"/>
<circle cx="1212.13" cy="260.72" r="2.65" fill="#eab839"/>
<circle cx="1225.12" cy="260.72" r="2.65" fill="#eab839"/>
<circle cx="1238.11" cy="260.72" r="2.65" fill="#eab839"/>
<circle cx="1251.1" cy="260.72" r="2.65" fill="#eab839"/>
<circle cx="1264.08" cy="260.72" r="2.65" fill="#eab839"/>
<circle cx="1277.07" cy="260.72" r="2.65" fill="#eab839"/>
<circle cx="1290.06" cy="260.72" r="2.65" fill="#eab839"/>
<circle cx="1303.04" cy="260.72" r="2.65" fill="#eab839"/>
<circle cx="1316.03" cy="260.72" r="2.65" fill="#eab839"/>
<circle cx="1329.02" cy="260.72" r="2.65" fill="#eab839"/>
<circle cx="1342.01" cy="260.72" r="2.65" fill="#eab839"/>
<circle cx="1354.99" cy="260.72" r="2.65" fill="#eab839"/>
<circle cx="1367.98" cy="260.72" r="2.65" fill="#eab839"/>
<circle cx="1380.97" cy="260.72" r="2.65" fill="#eab839"/>
<circle cx="1393.95" cy="260.72" r="2.65" fill="#eab839"/>
<circle cx="1406.94" cy="260.72" r="2.65" fill="#eab839"/>
<circle cx="1419.93" cy="260.72" r="2.65" fill="#eab839"/>
<circle cx="1432.91" cy="260.72" r="2.65" fill="#eab839"/>
<circle cx="1445.9" cy="260.72" r="2.65" fill="#eab839"/>
<circle cx="1458.89" cy="260.72" r="2.65" fill="#eab839"/>
<circle cx="1471.88" cy="260.72" r="2.65" fill="#eab839"/>
<text x="1130.2" y="267.6" font-size="10" text-anchor="end" fill="#585a62" font-weight="400" letter-spacing="-0.15">0</text>
<text x="1130.2" y="212.9" font-size="10" text-anchor="end" fill="#585a62" font-weight="400" letter-spacing="-0.15">50</text>
<text x="1130.2" y="158.2" font-size="10" text-anchor="end" fill="#585a62" font-weight="400" letter-spacing="-0.15">100</text>
<text x="1130.2" y="103.5" font-size="10" text-anchor="end" fill="#585a62" font-weight="400" letter-spacing="-0.15">150</text>
<text x="1130.2" y="48.8" font-size="10" text-anchor="end" fill="#585a62" font-weight="400" letter-spacing="-0.15">200</text>
<text x="1212.7" y="279.5" font-size="10" text-anchor="middle" fill="#585a62" font-weight="400" letter-spacing="-0.15">4/2</text>
<text x="1309.8" y="279.5" font-size="10" text-anchor="middle" fill="#585a62" font-weight="400" letter-spacing="-0.15">4/4</text>
<text x="1407.4" y="279.5" font-size="10" text-anchor="middle" fill="#585a62" font-weight="400" letter-spacing="-0.15">4/6</text>
<rect x="1117.6" y="304.3" width="364.4" height="22" fill="#dde4ed"/>
<text x="1393.1" y="298.7" font-size="10" text-anchor="end" fill="#0083b3" stroke="#0083b3" stroke-width="0.4" textLength="16.7" lengthAdjust="spacingAndGlyphs">min</text>
<text x="1433.1" y="298.7" font-size="10" text-anchor="end" fill="#0083b3" stroke="#0083b3" stroke-width="0.4" textLength="18.8" lengthAdjust="spacingAndGlyphs">max</text>
<text x="1474.3" y="298.7" font-size="10" text-anchor="end" fill="#0083b3" stroke="#0083b3" stroke-width="0.4" textLength="31.9" lengthAdjust="spacingAndGlyphs">current</text>
<rect x="1126.8" y="315" width="10.4" height="3.4" rx="1" fill="#7eb26d"/>
<text x="1143.9" y="318.6" font-size="10" text-anchor="start" fill="#585a62" font-weight="400">all.ropsten.ethdisco.net</text>
<text x="1393.1" y="318.6" font-size="10" text-anchor="end" fill="#585a62" font-weight="400">159</text>
<text x="1433.1" y="318.6" font-size="10" text-anchor="end" fill="#585a62" font-weight="400">163</text>
<text x="1474.3" y="318.6" font-size="10" text-anchor="end" fill="#585a62" font-weight="400">161</text>
<rect x="1126.8" y="337" width="10.4" height="3.4" rx="1" fill="#eab839"/>
<text x="1143.9" y="340.6" font-size="10" text-anchor="start" fill="#585a62" font-weight="400">les.ropsten.ethdisco.net</text>
<text x="1393.1" y="340.6" font-size="10" text-anchor="end" fill="#585a62" font-weight="400">3</text>
<text x="1433.1" y="340.6" font-size="10" text-anchor="end" fill="#585a62" font-weight="400">3</text>
<text x="1474.3" y="340.6" font-size="10" text-anchor="end" fill="#585a62" font-weight="400">3</text>
<rect x="1482.2" y="290.3" width="5.6" height="58.7" rx="2.8" fill="#c7d0d9"/>
<path d="M1491.6,349.8 h1.4 v4.9 h-5.3 v-1.4 h3.9 Z" fill="#9aa3ad"/>
<line x1="-60" y1="633.5" x2="674.5" y2="633.5" stroke="#ebebeb" stroke-width="1"/>
<line x1="-60" y1="595.5" x2="674.5" y2="595.5" stroke="#ebebeb" stroke-width="1"/>
<line x1="-60" y1="557.5" x2="674.5" y2="557.5" stroke="#ebebeb" stroke-width="1"/>
<line x1="-60" y1="519.5" x2="674.5" y2="519.5" stroke="#ebebeb" stroke-width="1"/>
<line x1="-60" y1="482.5" x2="674.5" y2="482.5" stroke="#ebebeb" stroke-width="1"/>
<line x1="-60" y1="444.5" x2="674.5" y2="444.5" stroke="#ebebeb" stroke-width="1"/>
<line x1="4.5" y1="444.3" x2="4.5" y2="633.2" stroke="#ebebeb" stroke-width="1"/>
<text x="4.3" y="648.6" font-size="10" text-anchor="middle" fill="#585a62" font-weight="400" letter-spacing="-0.2">12:00</text>
<line x1="65.5" y1="444.3" x2="65.5" y2="633.2" stroke="#ebebeb" stroke-width="1"/>
<text x="65.09" y="648.6" font-size="10" text-anchor="middle" fill="#585a62" font-weight="400" letter-spacing="-0.2">14:00</text>
<line x1="125.5" y1="444.3" x2="125.5" y2="633.2" stroke="#ebebeb" stroke-width="1"/>
<text x="125.88" y="648.6" font-size="10" text-anchor="middle" fill="#585a62" font-weight="400" letter-spacing="-0.2">16:00</text>
<line x1="186.5" y1="444.3" x2="186.5" y2="633.2" stroke="#ebebeb" stroke-width="1"/>
<text x="186.67" y="648.6" font-size="10" text-anchor="middle" fill="#585a62" font-weight="400" letter-spacing="-0.2">18:00</text>
<line x1="247.5" y1="444.3" x2="247.5" y2="633.2" stroke="#ebebeb" stroke-width="1"/>
<text x="247.46" y="648.6" font-size="10" text-anchor="middle" fill="#585a62" font-weight="400" letter-spacing="-0.2">20:00</text>
<line x1="308.5" y1="444.3" x2="308.5" y2="633.2" stroke="#ebebeb" stroke-width="1"/>
<text x="308.25" y="648.6" font-size="10" text-anchor="middle" fill="#585a62" font-weight="400" letter-spacing="-0.2">22:00</text>
<line x1="369.5" y1="444.3" x2="369.5" y2="633.2" stroke="#ebebeb" stroke-width="1"/>
<text x="369.04" y="648.6" font-size="10" text-anchor="middle" fill="#585a62" font-weight="400" letter-spacing="-0.2">00:00</text>
<line x1="429.5" y1="444.3" x2="429.5" y2="633.2" stroke="#ebebeb" stroke-width="1"/>
<text x="429.83" y="648.6" font-size="10" text-anchor="middle" fill="#585a62" font-weight="400" letter-spacing="-0.2">02:00</text>
<line x1="490.5" y1="444.3" x2="490.5" y2="633.2" stroke="#ebebeb" stroke-width="1"/>
<text x="490.62" y="648.6" font-size="10" text-anchor="middle" fill="#585a62" font-weight="400" letter-spacing="-0.2">04:00</text>
<line x1="551.5" y1="444.3" x2="551.5" y2="633.2" stroke="#ebebeb" stroke-width="1"/>
<text x="551.41" y="648.6" font-size="10" text-anchor="middle" fill="#585a62" font-weight="400" letter-spacing="-0.2">06:00</text>
<line x1="612.5" y1="444.3" x2="612.5" y2="633.2" stroke="#ebebeb" stroke-width="1"/>
<text x="612.2" y="648.6" font-size="10" text-anchor="middle" fill="#585a62" font-weight="400" letter-spacing="-0.2">08:00</text>
<line x1="672.5" y1="444.3" x2="672.5" y2="633.2" stroke="#ebebeb" stroke-width="1"/>
<text x="672.99" y="648.6" font-size="10" text-anchor="middle" fill="#585a62" font-weight="400" letter-spacing="-0.2">10:00</text>
<path d="M-12,542.4 L-11.53,546.83 L-11.06,544.03 L-10.59,541.39 L-10.12,547.94 L-9.65,583.29 L-9.18,543.93 L-8.71,536.87 L-8.24,537.4 L-7.77,541.13 L-7.3,540.99 L-6.83,544.6 L-6.36,566.89 L-5.89,537.58 L-5.42,541.39 L-4.95,538.76 L-4.48,539.52 L-4.01,577.02 L-3.54,547.51 L-3.07,536.77 L-2.6,537.23 L-2.13,534.04 L-1.66,533.75 L-1.19,585.33 L-0.72,535.59 L-0.25,534.98 L0.22,538.35 L0.69,539.02 L1.16,544.36 L1.63,580.6 L2.1,547.57 L2.57,551.84 L3.04,555.45 L3.51,548.52 L3.98,556.53 L4.45,555.51 L4.92,582.78 L5.39,552.74 L5.86,551.41 L6.33,550.55 L6.8,555.96 L7.27,555.8 L7.74,547.82 L8.21,577.8 L8.68,554.79 L9.15,553.9 L9.62,555.06 L10.09,575.13 L10.56,560.53 L11.03,557.09 L11.5,551.3 L11.97,572.44 L12.44,548.31 L12.91,549.68 L13.38,546.12 L13.85,568.56 L14.32,543.37 L14.79,541.18 L15.26,539.12 L15.73,537.56 L16.2,539.63 L16.67,528.38 L17.14,560.73 L17.61,522.67 L18.08,507.04 L18.55,493.94 L19.02,579.46 L19.49,484.81 L19.96,494.61 L20.43,504.7 L20.9,504.07 L21.37,584.76 L21.84,512.42 L22.31,518.88 L22.78,513.81 L23.25,508.87 L23.72,508.67 L24.19,517.22 L24.66,594.49 L25.13,514.67 L25.6,508.72 L26.07,514.16 L26.54,521.62 L27.01,568.23 L27.48,524.08 L27.95,523.04 L28.42,516.71 L28.89,528.22 L29.36,526.87 L29.83,537.51 L30.3,567.92 L30.77,521.85 L31.24,524.85 L31.71,527.29 L32.18,527.66 L32.65,560.18 L33.12,530.64 L33.59,521.06 L34.06,527.98 L34.53,564.16 L35,512.79 L35.47,513.27 L35.94,512.18 L36.41,514.29 L36.88,574.55 L37.35,521.48 L37.82,530.14 L38.29,523.96 L38.76,529.22 L39.23,565.69 L39.7,530.19 L40.17,536.56 L40.64,536.08 L41.11,532.59 L41.58,530.74 L42.05,580.52 L42.52,525.54 L42.99,517.52 L43.46,517.44 L43.93,503.08 L44.4,510.66 L44.87,504.58 L45.34,573.64 L45.81,516.48 L46.28,522.93 L46.75,528.17 L47.22,537.21 L47.69,533.47 L48.16,535.19 L48.63,569.93 L49.1,534.56 L49.57,531.58 L50.04,549.07 L50.51,529.62 L50.98,533.54 L51.45,529.6 L51.92,576.77 L52.39,528.74 L52.86,527.38 L53.33,532.49 L53.8,569.58 L54.27,529.19 L54.74,529.72 L55.21,533.08 L55.68,567.34 L56.15,535.61 L56.62,530.01 L57.09,536.38 L57.56,547.88 L58.03,542.64 L58.5,543.57 L58.97,578.74 L59.44,552.84 L59.91,542.67 L60.38,541.72 L60.85,545.58 L61.32,579.65 L61.79,549.31 L62.26,546.69 L62.73,547.78 L63.2,550.02 L63.67,583.22 L64.14,545.88 L64.61,547.43 L65.08,545.65 L65.55,588.76 L66.02,541.66 L66.49,545.54 L66.96,538.52 L67.43,539.71 L67.9,568.25 L68.37,542.36 L68.84,541.47 L69.31,543.77 L69.78,543.23 L70.25,538.51 L70.72,548.79 L71.19,566.34 L71.66,524.38 L72.13,525.01 L72.6,519.32 L73.07,509.58 L73.54,513.03 L74.01,512.36 L74.48,572.38 L74.95,519.22 L75.42,515.01 L75.89,525.54 L76.36,517.98 L76.83,516 L77.3,527.73 L77.77,578.58 L78.24,524.21 L78.71,529.34 L79.18,535.15 L79.65,542.3 L80.12,543.41 L80.59,568.63 L81.06,538.73 L81.53,543.41 L82,545.14 L82.47,573.01 L82.94,542.42 L83.41,549.09 L83.88,540.86 L84.35,571.66 L84.82,540.79 L85.29,549.59 L85.76,547.14 L86.23,576.66 L86.7,542.39 L87.17,549.68 L87.64,543.04 L88.11,553.34 L88.58,546.21 L89.05,581.73 L89.52,547.62 L89.99,550.47 L90.46,549.62 L90.93,541.94 L91.4,545.59 L91.87,583.85 L92.34,545.77 L92.81,541.1 L93.28,537.28 L93.75,544 L94.22,542.16 L94.69,541.26 L95.16,584.21 L95.63,528.03 L96.1,525.83 L96.57,513.28 L97.04,510.93 L97.51,515.96 L97.98,585.49 L98.45,513.68 L98.92,509.69 L99.39,511.07 L99.86,512.05 L100.33,513.57 L100.8,512.94 L101.27,563.31 L101.74,521.44 L102.21,521.66 L102.68,533.42 L103.15,536.35 L103.62,587.36 L104.09,538.74 L104.56,545.46 L105.03,538.88 L105.5,577.21 L105.97,539.83 L106.44,538.5 L106.91,544.91 L107.38,538.26 L107.85,539.57 L108.32,572.87 L108.79,538.29 L109.26,537.57 L109.73,547.87 L110.2,535.9 L110.67,537.16 L111.14,535.98 L111.61,589.65 L112.08,542.31 L112.55,540.04 L113.02,540.98 L113.49,536.07 L113.96,568.26 L114.43,547.42 L114.9,545.87 L115.37,546.32 L115.84,541.69 L116.31,587.1 L116.78,548.22 L117.25,550.06 L117.72,557.28 L118.19,562.47 L118.66,552.13 L119.13,586.04 L119.6,545.89 L120.07,550.35 L120.54,540.9 L121.01,537.29 L121.48,541.78 L121.95,534.58 L122.42,565.27 L122.89,533.61 L123.36,532.09 L123.83,531.12 L124.3,580.57 L124.77,530.94 L125.24,536.9 L125.71,537.59 L126.18,543.35 L126.65,535.29 L127.12,539.57 L127.59,579.71 L128.06,539.35 L128.53,541.62 L129,542.64 L129.47,545.57 L129.94,546.94 L130.41,543.94 L130.88,577.72 L131.35,549.63 L131.82,552.23 L132.29,547.93 L132.76,549.41 L133.23,554.68 L133.7,543.18 L134.17,578.19 L134.64,543.69 L135.11,541.07 L135.58,534.52 L136.05,534.52 L136.52,541.15 L136.99,535.54 L137.46,568.25 L137.93,539.59 L138.4,540.68 L138.87,539.89 L139.34,547.27 L139.81,586.18 L140.28,548.7 L140.75,543.44 L141.22,545.86 L141.69,587.85 L142.16,540.21 L142.63,542.96 L143.1,542.07 L143.57,553.98 L144.04,548.46 L144.51,541.92 L144.98,570.21 L145.45,544.3 L145.92,549.24 L146.39,552.5 L146.86,557.06 L147.33,547.65 L147.8,550.93 L148.27,579.05 L148.74,547.29 L149.21,558.09 L149.68,549.34 L150.15,551.42 L150.62,550.17 L151.09,548.48 L151.56,585.65 L152.03,547.02 L152.5,559.55 L152.97,557.63 L153.44,555.55 L153.91,578.63 L154.38,556.72 L154.85,561.51 L155.32,556.07 L155.79,553.46 L156.26,584.18 L156.73,545.87 L157.2,539.94 L157.67,539.63 L158.14,535.29 L158.61,583.85 L159.08,528.31 L159.55,527.29 L160.02,522.85 L160.49,527.37 L160.96,594.41 L161.43,521.84 L161.9,527.94 L162.37,528.63 L162.84,519.9 L163.31,535.02 L163.78,568.85 L164.25,527.18 L164.72,529 L165.19,525.78 L165.66,524.39 L166.13,568.51 L166.6,521.79 L167.07,521.33 L167.54,517.87 L168.01,520.66 L168.48,518.7 L168.95,521.64 L169.42,571.45 L169.89,516.86 L170.36,516.16 L170.83,515.54 L171.3,524.43 L171.77,510.98 L172.24,521.53 L172.71,570.02 L173.18,524.04 L173.65,517.87 L174.12,524.08 L174.59,582.81 L175.06,530.7 L175.53,532.05 L176,531.01 L176.47,535.3 L176.94,536.68 L177.41,529.89 L177.88,593.14 L178.35,522.18 L178.82,512.41 L179.29,511.25 L179.76,500.84 L180.23,576.31 L180.7,495.03 L181.17,492.14 L181.64,493.62 L182.11,482.99 L182.58,578.29 L183.05,501.02 L183.52,507.67 L183.99,509.71 L184.46,510.83 L184.93,511.83 L185.4,586.15 L185.87,521.26 L186.34,517.21 L186.81,515.53 L187.28,518.54 L187.75,514.29 L188.22,565.31 L188.69,526.99 L189.16,524.05 L189.63,522.97 L190.1,519.35 L190.57,535.01 L191.04,577.1 L191.51,528.96 L191.98,530.81 L192.45,523.78 L192.92,525.59 L193.39,537.6 L193.86,528.26 L194.33,577.47 L194.8,529.19 L195.27,531.29 L195.74,531.27 L196.21,568.67 L196.68,532.77 L197.15,533.67 L197.62,535.64 L198.09,535.97 L198.56,538.37 L199.03,597.64 L199.5,536.33 L199.97,533.89 L200.44,540.3 L200.91,532.96 L201.38,537.5 L201.85,574.6 L202.32,532.8 L202.79,530.12 L203.26,540.92 L203.73,582.85 L204.2,533.06 L204.67,529.26 L205.14,536.03 L205.61,579.95 L206.08,538.14 L206.55,537.76 L207.02,534.4 L207.49,534.7 L207.96,524.38 L208.43,580.8 L208.9,526 L209.37,526.06 L209.84,517.25 L210.31,531.63 L210.78,585.75 L211.25,519.57 L211.72,518.5 L212.19,520.59 L212.66,564.62 L213.13,529.8 L213.6,534.21 L214.07,526.92 L214.54,535.65 L215.01,578.12 L215.48,528.9 L215.95,526.49 L216.42,526.52 L216.89,535.18 L217.36,526.13 L217.83,592.24 L218.3,525.07 L218.77,532.24 L219.24,523.88 L219.71,523.27 L220.18,522.54 L220.65,564.3 L221.12,522.8 L221.59,523.43 L222.06,521.47 L222.53,525.49 L223,520.96 L223.47,522.67 L223.94,569.61 L224.41,520.17 L224.88,522.81 L225.35,511.67 L225.82,510.6 L226.29,583.69 L226.76,506.85 L227.23,516.6 L227.7,514.63 L228.17,518.57 L228.64,526.87 L229.11,561.84 L229.58,527.28 L230.05,532.66 L230.52,529.27 L230.99,583.17 L231.46,533.24 L231.93,540.31 L232.4,533.69 L232.87,535.11 L233.34,573.73 L233.81,523.81 L234.28,530.08 L234.75,521.6 L235.22,584.69 L235.69,521.82 L236.16,524.27 L236.63,527.68 L237.1,579.88 L237.57,534.07 L238.04,539.7 L238.51,542.06 L238.98,535.34 L239.45,547.5 L239.92,569.42 L240.39,533.38 L240.86,532.81 L241.33,538.09 L241.8,531.76 L242.27,524.67 L242.74,574.43 L243.21,523.75 L243.68,530.89 L244.15,530.26 L244.62,533.75 L245.09,528.07 L245.56,527.16 L246.03,586.82 L246.5,535.79 L246.97,540.5 L247.44,540.4 L247.91,541.21 L248.38,539.03 L248.85,592.33 L249.32,541.23 L249.79,543.22 L250.26,538.18 L250.73,545.5 L251.2,580.51 L251.67,551.65 L252.14,545.95 L252.61,550.2 L253.08,547.99 L253.55,575.36 L254.02,548.72 L254.49,556.07 L254.96,551.16 L255.43,542.22 L255.9,578.37 L256.37,540.26 L256.84,523.83 L257.31,514.94 L257.78,512.15 L258.25,521.21 L258.72,567.85 L259.19,517.53 L259.66,517.68 L260.13,526.3 L260.6,524.51 L261.07,524.73 L261.54,566.5 L262.01,540.09 L262.48,536.1 L262.95,535.57 L263.42,542.4 L263.89,547.71 L264.36,586.79 L264.83,546.22 L265.3,550.16 L265.77,552.95 L266.24,549.57 L266.71,548.33 L267.18,591.93 L267.65,549.4 L268.12,548.86 L268.59,549 L269.06,550.56 L269.53,575.65 L270,556.3 L270.47,552.53 L270.94,548.2 L271.41,549.22 L271.88,548.87 L272.35,573.66 L272.82,545.12 L273.29,545.54 L273.76,542.4 L274.23,533.08 L274.7,542.18 L275.17,543.05 L275.64,572.57 L276.11,537.65 L276.58,530.98 L277.05,533.31 L277.52,577.73 L277.99,530.73 L278.46,527.33 L278.93,526.77 L279.4,524.9 L279.87,579.62 L280.34,537.06 L280.81,522.44 L281.28,524.1 L281.75,587.25 L282.22,530.29 L282.69,529.72 L283.16,532.37 L283.63,531.53 L284.1,572.24 L284.57,537.49 L285.04,527.48 L285.51,535.35 L285.98,528.61 L286.45,534.47 L286.92,583.26 L287.39,541.46 L287.86,549.22 L288.33,539.96 L288.8,547.08 L289.27,551.37 L289.74,586.17 L290.21,537.11 L290.68,544.35 L291.15,550.37 L291.62,543.65 L292.09,532.69 L292.56,585.81 L293.03,537.8 L293.5,543.16 L293.97,533.7 L294.44,541.08 L294.91,578.54 L295.38,545.2 L295.85,545.91 L296.32,553.01 L296.79,548.25 L297.26,550.46 L297.73,553.71 L298.2,587.59 L298.67,552.18 L299.14,555.09 L299.61,553.47 L300.08,559.33 L300.55,558.16 L301.02,559.05 L301.49,583.31 L301.96,554.63 L302.43,556.75 L302.9,553.12 L303.37,555.94 L303.84,560.78 L304.31,585.77 L304.78,557.74 L305.25,555.15 L305.72,555.84 L306.19,558.76 L306.66,559.48 L307.13,555.17 L307.6,575.46 L308.07,558.26 L308.54,563.77 L309.01,559.44 L309.48,584.55 L309.95,548.7 L310.42,547.23 L310.89,534.52 L311.36,535.01 L311.83,573.67 L312.3,526.24 L312.77,522.91 L313.24,523.16 L313.71,530.59 L314.18,539.06 L314.65,593.99 L315.12,531.81 L315.59,533.46 L316.06,540.54 L316.53,536.79 L317,541.39 L317.47,583.35 L317.94,541.47 L318.41,543.33 L318.88,545.86 L319.35,547.69 L319.82,544.62 L320.29,573.77 L320.76,557 L321.23,547.65 L321.7,545.33 L322.17,548.09 L322.64,577.8 L323.11,543.36 L323.58,543.21 L324.05,547.11 L324.52,539.38 L324.99,539.32 L325.46,548.09 L325.93,568.7 L326.4,542.55 L326.87,548.82 L327.34,543.79 L327.81,545.8 L328.28,540.57 L328.75,543.28 L329.22,593.55 L329.69,554.88 L330.16,550.4 L330.63,555.57 L331.1,551.69 L331.57,572.69 L332.04,556.03 L332.51,557.67 L332.98,556.73 L333.45,553.99 L333.92,545.05 L334.39,548.64 L334.86,579.18 L335.33,538.25 L335.8,540.75 L336.27,538.69 L336.74,539.09 L337.21,585.55 L337.68,548.3 L338.15,533.51 L338.62,536.05 L339.09,577.9 L339.56,537.22 L340.03,549.16 L340.5,543.74 L340.97,540.53 L341.44,549.05 L341.91,551.42 L342.38,586.22 L342.85,548.69 L343.32,545.04 L343.79,551.6 L344.26,579.88 L344.73,547.47 L345.2,544.36 L345.67,540.8 L346.14,551.06 L346.61,569.48 L347.08,545.28 L347.55,552.11 L348.02,546.25 L348.49,561.36 L348.96,555.37 L349.43,555.35 L349.9,581.71 L350.37,552.07 L350.84,558.83 L351.31,549.14 L351.78,549.85 L352.25,601.76 L352.72,547.6 L353.19,544.81 L353.66,547.36 L354.13,546.88 L354.6,571.1 L355.07,540.69 L355.54,546.71 L356.01,545.11 L356.48,547.45 L356.95,591.34 L357.42,548.86 L357.89,551.95 L358.36,554.93 L358.83,558.93 L359.3,581.48 L359.77,556.88 L360.24,563.5 L360.71,566.38 L361.18,557.69 L361.65,580.12 L362.12,555.65 L362.59,569.62 L363.06,552.23 L363.53,550.69 L364,551.32 L364.47,582.16 L364.94,548.05 L365.41,546.89 L365.88,540.17 L366.35,545.49 L366.82,545.4 L367.29,590.7 L367.76,547.82 L368.23,551.59 L368.7,551.54 L369.17,554.77 L369.64,560.92 L370.11,560.95 L370.58,574.9 L371.05,555.93 L371.52,555.91 L371.99,555.51 L372.46,559.47 L372.93,585.37 L373.4,553.34 L373.87,561.03 L374.34,551.02 L374.81,550.3 L375.28,589.11 L375.75,550 L376.22,563.57 L376.69,549.52 L377.16,547.55 L377.63,559.06 L378.1,586.42 L378.57,549.07 L379.04,548.82 L379.51,550.67 L379.98,550.95 L380.45,548.86 L380.92,582.32 L381.39,551.01 L381.86,550.53 L382.33,551.57 L382.8,555.36 L383.27,589.02 L383.74,554.79 L384.21,557.69 L384.68,553.05 L385.15,558.14 L385.62,578.5 L386.09,560.02 L386.56,554.33 L387.03,554.64 L387.5,557 L387.97,554.48 L388.44,555.18 L388.91,589.18 L389.38,562.3 L389.85,564.15 L390.32,559.1 L390.79,585.31 L391.26,554.41 L391.73,554.93 L392.2,564.25 L392.67,578.82 L393.14,564.21 L393.61,556.53 L394.08,552.49 L394.55,553.36 L395.02,555.93 L395.49,585.63 L395.96,554.01 L396.43,554.25 L396.9,550.63 L397.37,556.91 L397.84,583.81 L398.31,558.07 L398.78,560.71 L399.25,555.34 L399.72,555.16 L400.19,588.8 L400.66,554.3 L401.13,553.98 L401.6,554.05 L402.07,561.13 L402.54,594.05 L403.01,549.54 L403.48,555.5 L403.95,554.29 L404.42,553.76 L404.89,590.98 L405.36,555.27 L405.83,554.98 L406.3,557.49 L406.77,554.88 L407.24,546.08 L407.71,571.8 L408.18,541.05 L408.65,549.3 L409.12,544.4 L409.59,539.47 L410.06,542.48 L410.53,536.02 L411,567.24 L411.47,530.35 L411.94,529.23 L412.41,526.54 L412.88,522.89 L413.35,530.06 L413.82,560.96 L414.29,520.38 L414.76,525.69 L415.23,519.78 L415.7,519.18 L416.17,522.59 L416.64,554.27 L417.11,510.61 L417.58,522.9 L418.05,522.49 L418.52,528.42 L418.99,525.71 L419.46,563.57 L419.93,527.24 L420.4,521.62 L420.87,517.3 L421.34,522.59 L421.81,522.06 L422.28,529.34 L422.75,582.36 L423.22,539.73 L423.69,536.35 L424.16,536.9 L424.63,544.78 L425.1,586.14 L425.57,546.85 L426.04,534.7 L426.51,525.75 L426.98,526.41 L427.45,570.44 L427.92,528.73 L428.39,526.03 L428.86,526.25 L429.33,572.13 L429.8,524.83 L430.27,529.85 L430.74,528.35 L431.21,530.46 L431.68,524.87 L432.15,563.89 L432.62,535.19 L433.09,540.91 L433.56,534.21 L434.03,569.43 L434.5,545.15 L434.97,544.12 L435.44,553.38 L435.91,550.76 L436.38,557.64 L436.85,584.86 L437.32,539.89 L437.79,542.09 L438.26,541.81 L438.73,546.26 L439.2,544.38 L439.67,573.48 L440.14,535.04 L440.61,531.53 L441.08,530.65 L441.55,531.57 L442.02,565.78 L442.49,533.59 L442.96,532.56 L443.43,532.41 L443.9,530.45 L444.37,535.5 L444.84,535.84 L445.31,570.59 L445.78,537.95 L446.25,543.5 L446.72,543.21 L447.19,577.35 L447.66,547.58 L448.13,549.79 L448.6,549.15 L449.07,546.37 L449.54,542.83 L450.01,552.06 L450.48,576.83 L450.95,550.48 L451.42,546.16 L451.89,557.84 L452.36,548.37 L452.83,584.71 L453.3,550.52 L453.77,555.79 L454.24,552.33 L454.71,560.37 L455.18,556.94 L455.65,573.49 L456.12,556.61 L456.59,561.45 L457.06,558.44 L457.53,558.77 L458,582.67 L458.47,532.32 L458.94,527.06 L459.41,521.24 L459.88,509.28 L460.35,585.03 L460.82,513.02 L461.29,519.79 L461.76,527.07 L462.23,531.15 L462.7,536.94 L463.17,585.92 L463.64,544.47 L464.11,537.59 L464.58,536.73 L465.05,546.83 L465.52,572.11 L465.99,542.72 L466.46,546.23 L466.93,545.95 L467.4,540.73 L467.87,546.82 L468.34,552.29 L468.81,587.06 L469.28,540.51 L469.75,543.9 L470.22,548.86 L470.69,536.32 L471.16,540.27 L471.63,542.92 L472.1,570.27 L472.57,543.98 L473.04,541.55 L473.51,536.58 L473.98,571.56 L474.45,541.61 L474.92,542.73 L475.39,539.65 L475.86,542.18 L476.33,543.2 L476.8,565.68 L477.27,539.94 L477.74,546.68 L478.21,537.62 L478.68,537.65 L479.15,535.91 L479.62,572.29 L480.09,536.91 L480.56,531.99 L481.03,537.67 L481.5,543.74 L481.97,540.14 L482.44,579.52 L482.91,539.42 L483.38,549.59 L483.85,538.25 L484.32,546.97 L484.79,571.63 L485.26,551.98 L485.73,544.98 L486.2,547.96 L486.67,553.88 L487.14,589.18 L487.61,553.72 L488.08,547.16 L488.55,551.07 L489.02,544.39 L489.49,538.86 L489.96,585.46 L490.43,535.27 L490.9,543.36 L491.37,539.91 L491.84,535.61 L492.31,534.65 L492.78,538.24 L493.25,571.98 L493.72,540.56 L494.19,535.2 L494.66,545.47 L495.13,569.29 L495.6,547.28 L496.07,542.64 L496.54,548.41 L497.01,548.23 L497.48,544.5 L497.95,572.31 L498.42,534.74 L498.89,534.97 L499.36,537.03 L499.83,569.6 L500.3,529.14 L500.77,522.89 L501.24,534.5 L501.71,529.11 L502.18,525.94 L502.65,530.13 L503.12,564.33 L503.59,534.86 L504.06,535.04 L504.53,533.23 L505,528.71 L505.47,533.2 L505.94,576.6 L506.41,540.37 L506.88,533.65 L507.35,542.07 L507.82,576.23 L508.29,537.42 L508.76,545.48 L509.23,544.1 L509.7,540.02 L510.17,554.12 L510.64,583.45 L511.11,551.57 L511.58,549.13 L512.05,544.89 L512.52,541.45 L512.99,573.12 L513.46,539.66 L513.93,542.94 L514.4,541.63 L514.87,541.25 L515.34,577.07 L515.81,543.19 L516.28,535.38 L516.75,536.13 L517.22,538.9 L517.69,532.59 L518.16,533.88 L518.63,579.05 L519.1,538.54 L519.57,544.04 L520.04,536.52 L520.51,539.3 L520.98,575.41 L521.45,550.96 L521.92,550.07 L522.39,542.41 L522.86,542.24 L523.33,585.85 L523.8,541.11 L524.27,537.3 L524.74,536.62 L525.21,539.33 L525.68,539.34 L526.15,541.28 L526.62,571.17 L527.09,540.64 L527.56,543.56 L528.03,537.59 L528.5,544.06 L528.97,567.9 L529.44,534.95 L529.91,536.79 L530.38,537.83 L530.85,543.94 L531.32,552.29 L531.79,567.4 L532.26,540.49 L532.73,551.66 L533.2,544.08 L533.67,545.27 L534.14,551.6 L534.61,569.2 L535.08,543.53 L535.55,550.58 L536.02,547.94 L536.49,546.11 L536.96,551.43 L537.43,545.44 L537.9,573.53 L538.37,551.23 L538.84,552.31 L539.31,548.34 L539.78,577.15 L540.25,548.5 L540.72,559.14 L541.19,549.39 L541.66,543.31 L542.13,586.65 L542.6,543.42 L543.07,545.47 L543.54,544.69 L544.01,542 L544.48,571.79 L544.95,546.5 L545.42,545.37 L545.89,537.97 L546.36,536.9 L546.83,583.39 L547.3,532.78 L547.77,531.79 L548.24,536.14 L548.71,537.82 L549.18,573.33 L549.65,537.15 L550.12,531.7 L550.59,531.77 L551.06,538.22 L551.53,530.97 L552,586.98 L552.47,529.88 L552.94,532.43 L553.41,534.35 L553.88,541.99 L554.35,538.19 L554.82,538.4 L555.29,575.54 L555.76,531.41 L556.23,535.39 L556.7,531.22 L557.17,535.08 L557.64,573.02 L558.11,530.58 L558.58,537.49 L559.05,529.78 L559.52,532.37 L559.99,529.57 L560.46,532.55 L560.93,578.41 L561.4,539.02 L561.87,538.42 L562.34,537.28 L562.81,541.43 L563.28,585.22 L563.75,543.66 L564.22,546.92 L564.69,538.32 L565.16,547.49 L565.63,586.82 L566.1,543.02 L566.57,538.67 L567.04,538.12 L567.51,569.31 L567.98,533.4 L568.45,535.84 L568.92,537.07 L569.39,550.81 L569.86,540.14 L570.33,577.16 L570.8,537.92 L571.27,541.27 L571.74,540.76 L572.21,541.37 L572.68,547.79 L573.15,543.52 L573.62,585.62 L574.09,542.1 L574.56,547.82 L575.03,544.21 L575.5,554.26 L575.97,545.39 L576.44,547.23 L576.91,582.96 L577.38,558.74 L577.85,559.59 L578.32,549.6 L578.79,551.23 L579.26,548 L579.73,577.19 L580.2,552.37 L580.67,546.04 L581.14,545.81 L581.61,541.27 L582.08,543.84 L582.55,525.95 L583.02,587.92 L583.49,517.3 L583.96,521.11 L584.43,523.82 L584.9,528.54 L585.37,576.6 L585.84,542.54 L586.31,540.64 L586.78,543.43 L587.25,552.5 L587.72,556.76 L588.19,577.19 L588.66,551.39 L589.13,548.85 L589.6,547.14 L590.07,553.2 L590.54,583.55 L591.01,543.91 L591.48,547.94 L591.95,540.03 L592.42,543.03 L592.89,537.08 L593.36,544.74 L593.83,580.47 L594.3,549.55 L594.77,551.12 L595.24,550.85 L595.71,550.82 L596.18,575.63 L596.65,553.45 L597.12,546.25 L597.59,557.27 L598.06,550.13 L598.53,569.96 L599,548.9 L599.47,540.93 L599.94,530.63 L600.41,524.78 L600.88,518.98 L601.35,511.27 L601.82,584.07 L602.29,507.27 L602.76,509.06 L603.23,514.4 L603.7,518.73 L604.17,517.62 L604.64,520.79 L605.11,575.33 L605.58,526.14 L606.05,529.25 L606.52,523.42 L606.99,527.94 L607.46,525.39 L607.93,520.17 L608.4,567.22 L608.87,523.76 L609.34,525.43 L609.81,524.26 L610.28,531.51 L610.75,573.45 L611.22,532.38 L611.69,530.3 L612.16,531.76 L612.63,571.92 L613.1,524.1 L613.57,519.64 L614.04,516.13 L614.51,515.57 L614.98,568.39 L615.45,524.03 L615.92,529.94 L616.39,526.3 L616.86,530.25 L617.33,532.01 L617.8,533.05 L618.27,584.06 L618.74,523.17 L619.21,532.09 L619.68,525.97 L620.15,531.77 L620.62,527.53 L621.09,576.86 L621.56,529.07 L622.03,530.53 L622.5,533.14 L622.97,585.26 L623.44,531.17 L623.91,528.04 L624.38,530.24 L624.85,534.96 L625.32,535.99 L625.79,537.91 L626.26,587.81 L626.73,536.49 L627.2,533.83 L627.67,541.81 L628.14,546.02 L628.61,542.25 L629.08,543.43 L629.55,576.73 L630.02,547.82 L630.49,549.65 L630.96,542.91 L631.43,576.01 L631.9,539.24 L632.37,542.17 L632.84,541.91 L633.31,534.61 L633.78,536.78 L634.25,569.38 L634.72,534.23 L635.19,528.3 L635.66,529.68 L636.13,535 L636.6,541.84 L637.07,546.96 L637.54,578.45 L638.01,557.35 L638.48,548.38 L638.95,544.29 L639.42,548.34 L639.89,538.4 L640.36,575.13 L640.83,534.27 L641.3,532.49 L641.77,542.05 L642.24,533.45 L642.71,580.72 L643.18,535.73 L643.65,534.4 L644.12,538.16 L644.59,533.83 L645.06,587.65 L645.53,534.82 L646,534.02 L646.47,538.14 L646.94,538.38 L647.41,564.75 L647.88,533.8 L648.35,544.22 L648.82,532.55 L649.29,531.41 L649.76,574.67 L650.23,541.74 L650.7,533.6 L651.17,526.98 L651.64,577.95 L652.11,534.5 L652.58,535.65 L653.05,540.43 L653.52,574.46 L653.99,542.94 L654.46,544.78 L654.93,547.06 L655.4,547.13 L655.87,552.07 L656.34,587.92 L656.81,545.28 L657.28,546.61 L657.75,542.23 L658.22,571.6 L658.69,544.4 L659.16,545.88 L659.63,544.58 L660.1,540.83 L660.57,578.42 L661.04,545.56 L661.51,539.82 L661.98,535.23 L662.45,537.01 L662.92,534.75 L663.39,548.05 L663.86,577.02 L664.33,544.82 L664.8,551.23 L665.27,551.93 L665.74,587.74 L666.21,549.64 L666.68,560.05 L667.15,548.03 L667.62,552.13 L668.09,551.9 L668.56,578.11 L669.03,556.49 L669.5,561.23 L669.97,567.81 L670.44,560.48 L670.91,589.3 L671.38,556.12 L671.6,592 L671.6,633.2 L-12,633.2 Z" fill="#7eb26d" fill-opacity="0.1"/>
<path d="M-12,542.4 L-11.53,546.83 L-11.06,544.03 L-10.59,541.39 L-10.12,547.94 L-9.65,583.29 L-9.18,543.93 L-8.71,536.87 L-8.24,537.4 L-7.77,541.13 L-7.3,540.99 L-6.83,544.6 L-6.36,566.89 L-5.89,537.58 L-5.42,541.39 L-4.95,538.76 L-4.48,539.52 L-4.01,577.02 L-3.54,547.51 L-3.07,536.77 L-2.6,537.23 L-2.13,534.04 L-1.66,533.75 L-1.19,585.33 L-0.72,535.59 L-0.25,534.98 L0.22,538.35 L0.69,539.02 L1.16,544.36 L1.63,580.6 L2.1,547.57 L2.57,551.84 L3.04,555.45 L3.51,548.52 L3.98,556.53 L4.45,555.51 L4.92,582.78 L5.39,552.74 L5.86,551.41 L6.33,550.55 L6.8,555.96 L7.27,555.8 L7.74,547.82 L8.21,577.8 L8.68,554.79 L9.15,553.9 L9.62,555.06 L10.09,575.13 L10.56,560.53 L11.03,557.09 L11.5,551.3 L11.97,572.44 L12.44,548.31 L12.91,549.68 L13.38,546.12 L13.85,568.56 L14.32,543.37 L14.79,541.18 L15.26,539.12 L15.73,537.56 L16.2,539.63 L16.67,528.38 L17.14,560.73 L17.61,522.67 L18.08,507.04 L18.55,493.94 L19.02,579.46 L19.49,484.81 L19.96,494.61 L20.43,504.7 L20.9,504.07 L21.37,584.76 L21.84,512.42 L22.31,518.88 L22.78,513.81 L23.25,508.87 L23.72,508.67 L24.19,517.22 L24.66,594.49 L25.13,514.67 L25.6,508.72 L26.07,514.16 L26.54,521.62 L27.01,568.23 L27.48,524.08 L27.95,523.04 L28.42,516.71 L28.89,528.22 L29.36,526.87 L29.83,537.51 L30.3,567.92 L30.77,521.85 L31.24,524.85 L31.71,527.29 L32.18,527.66 L32.65,560.18 L33.12,530.64 L33.59,521.06 L34.06,527.98 L34.53,564.16 L35,512.79 L35.47,513.27 L35.94,512.18 L36.41,514.29 L36.88,574.55 L37.35,521.48 L37.82,530.14 L38.29,523.96 L38.76,529.22 L39.23,565.69 L39.7,530.19 L40.17,536.56 L40.64,536.08 L41.11,532.59 L41.58,530.74 L42.05,580.52 L42.52,525.54 L42.99,517.52 L43.46,517.44 L43.93,503.08 L44.4,510.66 L44.87,504.58 L45.34,573.64 L45.81,516.48 L46.28,522.93 L46.75,528.17 L47.22,537.21 L47.69,533.47 L48.16,535.19 L48.63,569.93 L49.1,534.56 L49.57,531.58 L50.04,549.07 L50.51,529.62 L50.98,533.54 L51.45,529.6 L51.92,576.77 L52.39,528.74 L52.86,527.38 L53.33,532.49 L53.8,569.58 L54.27,529.19 L54.74,529.72 L55.21,533.08 L55.68,567.34 L56.15,535.61 L56.62,530.01 L57.09,536.38 L57.56,547.88 L58.03,542.64 L58.5,543.57 L58.97,578.74 L59.44,552.84 L59.91,542.67 L60.38,541.72 L60.85,545.58 L61.32,579.65 L61.79,549.31 L62.26,546.69 L62.73,547.78 L63.2,550.02 L63.67,583.22 L64.14,545.88 L64.61,547.43 L65.08,545.65 L65.55,588.76 L66.02,541.66 L66.49,545.54 L66.96,538.52 L67.43,539.71 L67.9,568.25 L68.37,542.36 L68.84,541.47 L69.31,543.77 L69.78,543.23 L70.25,538.51 L70.72,548.79 L71.19,566.34 L71.66,524.38 L72.13,525.01 L72.6,519.32 L73.07,509.58 L73.54,513.03 L74.01,512.36 L74.48,572.38 L74.95,519.22 L75.42,515.01 L75.89,525.54 L76.36,517.98 L76.83,516 L77.3,527.73 L77.77,578.58 L78.24,524.21 L78.71,529.34 L79.18,535.15 L79.65,542.3 L80.12,543.41 L80.59,568.63 L81.06,538.73 L81.53,543.41 L82,545.14 L82.47,573.01 L82.94,542.42 L83.41,549.09 L83.88,540.86 L84.35,571.66 L84.82,540.79 L85.29,549.59 L85.76,547.14 L86.23,576.66 L86.7,542.39 L87.17,549.68 L87.64,543.04 L88.11,553.34 L88.58,546.21 L89.05,581.73 L89.52,547.62 L89.99,550.47 L90.46,549.62 L90.93,541.94 L91.4,545.59 L91.87,583.85 L92.34,545.77 L92.81,541.1 L93.28,537.28 L93.75,544 L94.22,542.16 L94.69,541.26 L95.16,584.21 L95.63,528.03 L96.1,525.83 L96.57,513.28 L97.04,510.93 L97.51,515.96 L97.98,585.49 L98.45,513.68 L98.92,509.69 L99.39,511.07 L99.86,512.05 L100.33,513.57 L100.8,512.94 L101.27,563.31 L101.74,521.44 L102.21,521.66 L102.68,533.42 L103.15,536.35 L103.62,587.36 L104.09,538.74 L104.56,545.46 L105.03,538.88 L105.5,577.21 L105.97,539.83 L106.44,538.5 L106.91,544.91 L107.38,538.26 L107.85,539.57 L108.32,572.87 L108.79,538.29 L109.26,537.57 L109.73,547.87 L110.2,535.9 L110.67,537.16 L111.14,535.98 L111.61,589.65 L112.08,542.31 L112.55,540.04 L113.02,540.98 L113.49,536.07 L113.96,568.26 L114.43,547.42 L114.9,545.87 L115.37,546.32 L115.84,541.69 L116.31,587.1 L116.78,548.22 L117.25,550.06 L117.72,557.28 L118.19,562.47 L118.66,552.13 L119.13,586.04 L119.6,545.89 L120.07,550.35 L120.54,540.9 L121.01,537.29 L121.48,541.78 L121.95,534.58 L122.42,565.27 L122.89,533.61 L123.36,532.09 L123.83,531.12 L124.3,580.57 L124.77,530.94 L125.24,536.9 L125.71,537.59 L126.18,543.35 L126.65,535.29 L127.12,539.57 L127.59,579.71 L128.06,539.35 L128.53,541.62 L129,542.64 L129.47,545.57 L129.94,546.94 L130.41,543.94 L130.88,577.72 L131.35,549.63 L131.82,552.23 L132.29,547.93 L132.76,549.41 L133.23,554.68 L133.7,543.18 L134.17,578.19 L134.64,543.69 L135.11,541.07 L135.58,534.52 L136.05,534.52 L136.52,541.15 L136.99,535.54 L137.46,568.25 L137.93,539.59 L138.4,540.68 L138.87,539.89 L139.34,547.27 L139.81,586.18 L140.28,548.7 L140.75,543.44 L141.22,545.86 L141.69,587.85 L142.16,540.21 L142.63,542.96 L143.1,542.07 L143.57,553.98 L144.04,548.46 L144.51,541.92 L144.98,570.21 L145.45,544.3 L145.92,549.24 L146.39,552.5 L146.86,557.06 L147.33,547.65 L147.8,550.93 L148.27,579.05 L148.74,547.29 L149.21,558.09 L149.68,549.34 L150.15,551.42 L150.62,550.17 L151.09,548.48 L151.56,585.65 L152.03,547.02 L152.5,559.55 L152.97,557.63 L153.44,555.55 L153.91,578.63 L154.38,556.72 L154.85,561.51 L155.32,556.07 L155.79,553.46 L156.26,584.18 L156.73,545.87 L157.2,539.94 L157.67,539.63 L158.14,535.29 L158.61,583.85 L159.08,528.31 L159.55,527.29 L160.02,522.85 L160.49,527.37 L160.96,594.41 L161.43,521.84 L161.9,527.94 L162.37,528.63 L162.84,519.9 L163.31,535.02 L163.78,568.85 L164.25,527.18 L164.72,529 L165.19,525.78 L165.66,524.39 L166.13,568.51 L166.6,521.79 L167.07,521.33 L167.54,517.87 L168.01,520.66 L168.48,518.7 L168.95,521.64 L169.42,571.45 L169.89,516.86 L170.36,516.16 L170.83,515.54 L171.3,524.43 L171.77,510.98 L172.24,521.53 L172.71,570.02 L173.18,524.04 L173.65,517.87 L174.12,524.08 L174.59,582.81 L175.06,530.7 L175.53,532.05 L176,531.01 L176.47,535.3 L176.94,536.68 L177.41,529.89 L177.88,593.14 L178.35,522.18 L178.82,512.41 L179.29,511.25 L179.76,500.84 L180.23,576.31 L180.7,495.03 L181.17,492.14 L181.64,493.62 L182.11,482.99 L182.58,578.29 L183.05,501.02 L183.52,507.67 L183.99,509.71 L184.46,510.83 L184.93,511.83 L185.4,586.15 L185.87,521.26 L186.34,517.21 L186.81,515.53 L187.28,518.54 L187.75,514.29 L188.22,565.31 L188.69,526.99 L189.16,524.05 L189.63,522.97 L190.1,519.35 L190.57,535.01 L191.04,577.1 L191.51,528.96 L191.98,530.81 L192.45,523.78 L192.92,525.59 L193.39,537.6 L193.86,528.26 L194.33,577.47 L194.8,529.19 L195.27,531.29 L195.74,531.27 L196.21,568.67 L196.68,532.77 L197.15,533.67 L197.62,535.64 L198.09,535.97 L198.56,538.37 L199.03,597.64 L199.5,536.33 L199.97,533.89 L200.44,540.3 L200.91,532.96 L201.38,537.5 L201.85,574.6 L202.32,532.8 L202.79,530.12 L203.26,540.92 L203.73,582.85 L204.2,533.06 L204.67,529.26 L205.14,536.03 L205.61,579.95 L206.08,538.14 L206.55,537.76 L207.02,534.4 L207.49,534.7 L207.96,524.38 L208.43,580.8 L208.9,526 L209.37,526.06 L209.84,517.25 L210.31,531.63 L210.78,585.75 L211.25,519.57 L211.72,518.5 L212.19,520.59 L212.66,564.62 L213.13,529.8 L213.6,534.21 L214.07,526.92 L214.54,535.65 L215.01,578.12 L215.48,528.9 L215.95,526.49 L216.42,526.52 L216.89,535.18 L217.36,526.13 L217.83,592.24 L218.3,525.07 L218.77,532.24 L219.24,523.88 L219.71,523.27 L220.18,522.54 L220.65,564.3 L221.12,522.8 L221.59,523.43 L222.06,521.47 L222.53,525.49 L223,520.96 L223.47,522.67 L223.94,569.61 L224.41,520.17 L224.88,522.81 L225.35,511.67 L225.82,510.6 L226.29,583.69 L226.76,506.85 L227.23,516.6 L227.7,514.63 L228.17,518.57 L228.64,526.87 L229.11,561.84 L229.58,527.28 L230.05,532.66 L230.52,529.27 L230.99,583.17 L231.46,533.24 L231.93,540.31 L232.4,533.69 L232.87,535.11 L233.34,573.73 L233.81,523.81 L234.28,530.08 L234.75,521.6 L235.22,584.69 L235.69,521.82 L236.16,524.27 L236.63,527.68 L237.1,579.88 L237.57,534.07 L238.04,539.7 L238.51,542.06 L238.98,535.34 L239.45,547.5 L239.92,569.42 L240.39,533.38 L240.86,532.81 L241.33,538.09 L241.8,531.76 L242.27,524.67 L242.74,574.43 L243.21,523.75 L243.68,530.89 L244.15,530.26 L244.62,533.75 L245.09,528.07 L245.56,527.16 L246.03,586.82 L246.5,535.79 L246.97,540.5 L247.44,540.4 L247.91,541.21 L248.38,539.03 L248.85,592.33 L249.32,541.23 L249.79,543.22 L250.26,538.18 L250.73,545.5 L251.2,580.51 L251.67,551.65 L252.14,545.95 L252.61,550.2 L253.08,547.99 L253.55,575.36 L254.02,548.72 L254.49,556.07 L254.96,551.16 L255.43,542.22 L255.9,578.37 L256.37,540.26 L256.84,523.83 L257.31,514.94 L257.78,512.15 L258.25,521.21 L258.72,567.85 L259.19,517.53 L259.66,517.68 L260.13,526.3 L260.6,524.51 L261.07,524.73 L261.54,566.5 L262.01,540.09 L262.48,536.1 L262.95,535.57 L263.42,542.4 L263.89,547.71 L264.36,586.79 L264.83,546.22 L265.3,550.16 L265.77,552.95 L266.24,549.57 L266.71,548.33 L267.18,591.93 L267.65,549.4 L268.12,548.86 L268.59,549 L269.06,550.56 L269.53,575.65 L270,556.3 L270.47,552.53 L270.94,548.2 L271.41,549.22 L271.88,548.87 L272.35,573.66 L272.82,545.12 L273.29,545.54 L273.76,542.4 L274.23,533.08 L274.7,542.18 L275.17,543.05 L275.64,572.57 L276.11,537.65 L276.58,530.98 L277.05,533.31 L277.52,577.73 L277.99,530.73 L278.46,527.33 L278.93,526.77 L279.4,524.9 L279.87,579.62 L280.34,537.06 L280.81,522.44 L281.28,524.1 L281.75,587.25 L282.22,530.29 L282.69,529.72 L283.16,532.37 L283.63,531.53 L284.1,572.24 L284.57,537.49 L285.04,527.48 L285.51,535.35 L285.98,528.61 L286.45,534.47 L286.92,583.26 L287.39,541.46 L287.86,549.22 L288.33,539.96 L288.8,547.08 L289.27,551.37 L289.74,586.17 L290.21,537.11 L290.68,544.35 L291.15,550.37 L291.62,543.65 L292.09,532.69 L292.56,585.81 L293.03,537.8 L293.5,543.16 L293.97,533.7 L294.44,541.08 L294.91,578.54 L295.38,545.2 L295.85,545.91 L296.32,553.01 L296.79,548.25 L297.26,550.46 L297.73,553.71 L298.2,587.59 L298.67,552.18 L299.14,555.09 L299.61,553.47 L300.08,559.33 L300.55,558.16 L301.02,559.05 L301.49,583.31 L301.96,554.63 L302.43,556.75 L302.9,553.12 L303.37,555.94 L303.84,560.78 L304.31,585.77 L304.78,557.74 L305.25,555.15 L305.72,555.84 L306.19,558.76 L306.66,559.48 L307.13,555.17 L307.6,575.46 L308.07,558.26 L308.54,563.77 L309.01,559.44 L309.48,584.55 L309.95,548.7 L310.42,547.23 L310.89,534.52 L311.36,535.01 L311.83,573.67 L312.3,526.24 L312.77,522.91 L313.24,523.16 L313.71,530.59 L314.18,539.06 L314.65,593.99 L315.12,531.81 L315.59,533.46 L316.06,540.54 L316.53,536.79 L317,541.39 L317.47,583.35 L317.94,541.47 L318.41,543.33 L318.88,545.86 L319.35,547.69 L319.82,544.62 L320.29,573.77 L320.76,557 L321.23,547.65 L321.7,545.33 L322.17,548.09 L322.64,577.8 L323.11,543.36 L323.58,543.21 L324.05,547.11 L324.52,539.38 L324.99,539.32 L325.46,548.09 L325.93,568.7 L326.4,542.55 L326.87,548.82 L327.34,543.79 L327.81,545.8 L328.28,540.57 L328.75,543.28 L329.22,593.55 L329.69,554.88 L330.16,550.4 L330.63,555.57 L331.1,551.69 L331.57,572.69 L332.04,556.03 L332.51,557.67 L332.98,556.73 L333.45,553.99 L333.92,545.05 L334.39,548.64 L334.86,579.18 L335.33,538.25 L335.8,540.75 L336.27,538.69 L336.74,539.09 L337.21,585.55 L337.68,548.3 L338.15,533.51 L338.62,536.05 L339.09,577.9 L339.56,537.22 L340.03,549.16 L340.5,543.74 L340.97,540.53 L341.44,549.05 L341.91,551.42 L342.38,586.22 L342.85,548.69 L343.32,545.04 L343.79,551.6 L344.26,579.88 L344.73,547.47 L345.2,544.36 L345.67,540.8 L346.14,551.06 L346.61,569.48 L347.08,545.28 L347.55,552.11 L348.02,546.25 L348.49,561.36 L348.96,555.37 L349.43,555.35 L349.9,581.71 L350.37,552.07 L350.84,558.83 L351.31,549.14 L351.78,549.85 L352.25,601.76 L352.72,547.6 L353.19,544.81 L353.66,547.36 L354.13,546.88 L354.6,571.1 L355.07,540.69 L355.54,546.71 L356.01,545.11 L356.48,547.45 L356.95,591.34 L357.42,548.86 L357.89,551.95 L358.36,554.93 L358.83,558.93 L359.3,581.48 L359.77,556.88 L360.24,563.5 L360.71,566.38 L361.18,557.69 L361.65,580.12 L362.12,555.65 L362.59,569.62 L363.06,552.23 L363.53,550.69 L364,551.32 L364.47,582.16 L364.94,548.05 L365.41,546.89 L365.88,540.17 L366.35,545.49 L366.82,545.4 L367.29,590.7 L367.76,547.82 L368.23,551.59 L368.7,551.54 L369.17,554.77 L369.64,560.92 L370.11,560.95 L370.58,574.9 L371.05,555.93 L371.52,555.91 L371.99,555.51 L372.46,559.47 L372.93,585.37 L373.4,553.34 L373.87,561.03 L374.34,551.02 L374.81,550.3 L375.28,589.11 L375.75,550 L376.22,563.57 L376.69,549.52 L377.16,547.55 L377.63,559.06 L378.1,586.42 L378.57,549.07 L379.04,548.82 L379.51,550.67 L379.98,550.95 L380.45,548.86 L380.92,582.32 L381.39,551.01 L381.86,550.53 L382.33,551.57 L382.8,555.36 L383.27,589.02 L383.74,554.79 L384.21,557.69 L384.68,553.05 L385.15,558.14 L385.62,578.5 L386.09,560.02 L386.56,554.33 L387.03,554.64 L387.5,557 L387.97,554.48 L388.44,555.18 L388.91,589.18 L389.38,562.3 L389.85,564.15 L390.32,559.1 L390.79,585.31 L391.26,554.41 L391.73,554.93 L392.2,564.25 L392.67,578.82 L393.14,564.21 L393.61,556.53 L394.08,552.49 L394.55,553.36 L395.02,555.93 L395.49,585.63 L395.96,554.01 L396.43,554.25 L396.9,550.63 L397.37,556.91 L397.84,583.81 L398.31,558.07 L398.78,560.71 L399.25,555.34 L399.72,555.16 L400.19,588.8 L400.66,554.3 L401.13,553.98 L401.6,554.05 L402.07,561.13 L402.54,594.05 L403.01,549.54 L403.48,555.5 L403.95,554.29 L404.42,553.76 L404.89,590.98 L405.36,555.27 L405.83,554.98 L406.3,557.49 L406.77,554.88 L407.24,546.08 L407.71,571.8 L408.18,541.05 L408.65,549.3 L409.12,544.4 L409.59,539.47 L410.06,542.48 L410.53,536.02 L411,567.24 L411.47,530.35 L411.94,529.23 L412.41,526.54 L412.88,522.89 L413.35,530.06 L413.82,560.96 L414.29,520.38 L414.76,525.69 L415.23,519.78 L415.7,519.18 L416.17,522.59 L416.64,554.27 L417.11,510.61 L417.58,522.9 L418.05,522.49 L418.52,528.42 L418.99,525.71 L419.46,563.57 L419.93,527.24 L420.4,521.62 L420.87,517.3 L421.34,522.59 L421.81,522.06 L422.28,529.34 L422.75,582.36 L423.22,539.73 L423.69,536.35 L424.16,536.9 L424.63,544.78 L425.1,586.14 L425.57,546.85 L426.04,534.7 L426.51,525.75 L426.98,526.41 L427.45,570.44 L427.92,528.73 L428.39,526.03 L428.86,526.25 L429.33,572.13 L429.8,524.83 L430.27,529.85 L430.74,528.35 L431.21,530.46 L431.68,524.87 L432.15,563.89 L432.62,535.19 L433.09,540.91 L433.56,534.21 L434.03,569.43 L434.5,545.15 L434.97,544.12 L435.44,553.38 L435.91,550.76 L436.38,557.64 L436.85,584.86 L437.32,539.89 L437.79,542.09 L438.26,541.81 L438.73,546.26 L439.2,544.38 L439.67,573.48 L440.14,535.04 L440.61,531.53 L441.08,530.65 L441.55,531.57 L442.02,565.78 L442.49,533.59 L442.96,532.56 L443.43,532.41 L443.9,530.45 L444.37,535.5 L444.84,535.84 L445.31,570.59 L445.78,537.95 L446.25,543.5 L446.72,543.21 L447.19,577.35 L447.66,547.58 L448.13,549.79 L448.6,549.15 L449.07,546.37 L449.54,542.83 L450.01,552.06 L450.48,576.83 L450.95,550.48 L451.42,546.16 L451.89,557.84 L452.36,548.37 L452.83,584.71 L453.3,550.52 L453.77,555.79 L454.24,552.33 L454.71,560.37 L455.18,556.94 L455.65,573.49 L456.12,556.61 L456.59,561.45 L457.06,558.44 L457.53,558.77 L458,582.67 L458.47,532.32 L458.94,527.06 L459.41,521.24 L459.88,509.28 L460.35,585.03 L460.82,513.02 L461.29,519.79 L461.76,527.07 L462.23,531.15 L462.7,536.94 L463.17,585.92 L463.64,544.47 L464.11,537.59 L464.58,536.73 L465.05,546.83 L465.52,572.11 L465.99,542.72 L466.46,546.23 L466.93,545.95 L467.4,540.73 L467.87,546.82 L468.34,552.29 L468.81,587.06 L469.28,540.51 L469.75,543.9 L470.22,548.86 L470.69,536.32 L471.16,540.27 L471.63,542.92 L472.1,570.27 L472.57,543.98 L473.04,541.55 L473.51,536.58 L473.98,571.56 L474.45,541.61 L474.92,542.73 L475.39,539.65 L475.86,542.18 L476.33,543.2 L476.8,565.68 L477.27,539.94 L477.74,546.68 L478.21,537.62 L478.68,537.65 L479.15,535.91 L479.62,572.29 L480.09,536.91 L480.56,531.99 L481.03,537.67 L481.5,543.74 L481.97,540.14 L482.44,579.52 L482.91,539.42 L483.38,549.59 L483.85,538.25 L484.32,546.97 L484.79,571.63 L485.26,551.98 L485.73,544.98 L486.2,547.96 L486.67,553.88 L487.14,589.18 L487.61,553.72 L488.08,547.16 L488.55,551.07 L489.02,544.39 L489.49,538.86 L489.96,585.46 L490.43,535.27 L490.9,543.36 L491.37,539.91 L491.84,535.61 L492.31,534.65 L492.78,538.24 L493.25,571.98 L493.72,540.56 L494.19,535.2 L494.66,545.47 L495.13,569.29 L495.6,547.28 L496.07,542.64 L496.54,548.41 L497.01,548.23 L497.48,544.5 L497.95,572.31 L498.42,534.74 L498.89,534.97 L499.36,537.03 L499.83,569.6 L500.3,529.14 L500.77,522.89 L501.24,534.5 L501.71,529.11 L502.18,525.94 L502.65,530.13 L503.12,564.33 L503.59,534.86 L504.06,535.04 L504.53,533.23 L505,528.71 L505.47,533.2 L505.94,576.6 L506.41,540.37 L506.88,533.65 L507.35,542.07 L507.82,576.23 L508.29,537.42 L508.76,545.48 L509.23,544.1 L509.7,540.02 L510.17,554.12 L510.64,583.45 L511.11,551.57 L511.58,549.13 L512.05,544.89 L512.52,541.45 L512.99,573.12 L513.46,539.66 L513.93,542.94 L514.4,541.63 L514.87,541.25 L515.34,577.07 L515.81,543.19 L516.28,535.38 L516.75,536.13 L517.22,538.9 L517.69,532.59 L518.16,533.88 L518.63,579.05 L519.1,538.54 L519.57,544.04 L520.04,536.52 L520.51,539.3 L520.98,575.41 L521.45,550.96 L521.92,550.07 L522.39,542.41 L522.86,542.24 L523.33,585.85 L523.8,541.11 L524.27,537.3 L524.74,536.62 L525.21,539.33 L525.68,539.34 L526.15,541.28 L526.62,571.17 L527.09,540.64 L527.56,543.56 L528.03,537.59 L528.5,544.06 L528.97,567.9 L529.44,534.95 L529.91,536.79 L530.38,537.83 L530.85,543.94 L531.32,552.29 L531.79,567.4 L532.26,540.49 L532.73,551.66 L533.2,544.08 L533.67,545.27 L534.14,551.6 L534.61,569.2 L535.08,543.53 L535.55,550.58 L536.02,547.94 L536.49,546.11 L536.96,551.43 L537.43,545.44 L537.9,573.53 L538.37,551.23 L538.84,552.31 L539.31,548.34 L539.78,577.15 L540.25,548.5 L540.72,559.14 L541.19,549.39 L541.66,543.31 L542.13,586.65 L542.6,543.42 L543.07,545.47 L543.54,544.69 L544.01,542 L544.48,571.79 L544.95,546.5 L545.42,545.37 L545.89,537.97 L546.36,536.9 L546.83,583.39 L547.3,532.78 L547.77,531.79 L548.24,536.14 L548.71,537.82 L549.18,573.33 L549.65,537.15 L550.12,531.7 L550.59,531.77 L551.06,538.22 L551.53,530.97 L552,586.98 L552.47,529.88 L552.94,532.43 L553.41,534.35 L553.88,541.99 L554.35,538.19 L554.82,538.4 L555.29,575.54 L555.76,531.41 L556.23,535.39 L556.7,531.22 L557.17,535.08 L557.64,573.02 L558.11,530.58 L558.58,537.49 L559.05,529.78 L559.52,532.37 L559.99,529.57 L560.46,532.55 L560.93,578.41 L561.4,539.02 L561.87,538.42 L562.34,537.28 L562.81,541.43 L563.28,585.22 L563.75,543.66 L564.22,546.92 L564.69,538.32 L565.16,547.49 L565.63,586.82 L566.1,543.02 L566.57,538.67 L567.04,538.12 L567.51,569.31 L567.98,533.4 L568.45,535.84 L568.92,537.07 L569.39,550.81 L569.86,540.14 L570.33,577.16 L570.8,537.92 L571.27,541.27 L571.74,540.76 L572.21,541.37 L572.68,547.79 L573.15,543.52 L573.62,585.62 L574.09,542.1 L574.56,547.82 L575.03,544.21 L575.5,554.26 L575.97,545.39 L576.44,547.23 L576.91,582.96 L577.38,558.74 L577.85,559.59 L578.32,549.6 L578.79,551.23 L579.26,548 L579.73,577.19 L580.2,552.37 L580.67,546.04 L581.14,545.81 L581.61,541.27 L582.08,543.84 L582.55,525.95 L583.02,587.92 L583.49,517.3 L583.96,521.11 L584.43,523.82 L584.9,528.54 L585.37,576.6 L585.84,542.54 L586.31,540.64 L586.78,543.43 L587.25,552.5 L587.72,556.76 L588.19,577.19 L588.66,551.39 L589.13,548.85 L589.6,547.14 L590.07,553.2 L590.54,583.55 L591.01,543.91 L591.48,547.94 L591.95,540.03 L592.42,543.03 L592.89,537.08 L593.36,544.74 L593.83,580.47 L594.3,549.55 L594.77,551.12 L595.24,550.85 L595.71,550.82 L596.18,575.63 L596.65,553.45 L597.12,546.25 L597.59,557.27 L598.06,550.13 L598.53,569.96 L599,548.9 L599.47,540.93 L599.94,530.63 L600.41,524.78 L600.88,518.98 L601.35,511.27 L601.82,584.07 L602.29,507.27 L602.76,509.06 L603.23,514.4 L603.7,518.73 L604.17,517.62 L604.64,520.79 L605.11,575.33 L605.58,526.14 L606.05,529.25 L606.52,523.42 L606.99,527.94 L607.46,525.39 L607.93,520.17 L608.4,567.22 L608.87,523.76 L609.34,525.43 L609.81,524.26 L610.28,531.51 L610.75,573.45 L611.22,532.38 L611.69,530.3 L612.16,531.76 L612.63,571.92 L613.1,524.1 L613.57,519.64 L614.04,516.13 L614.51,515.57 L614.98,568.39 L615.45,524.03 L615.92,529.94 L616.39,526.3 L616.86,530.25 L617.33,532.01 L617.8,533.05 L618.27,584.06 L618.74,523.17 L619.21,532.09 L619.68,525.97 L620.15,531.77 L620.62,527.53 L621.09,576.86 L621.56,529.07 L622.03,530.53 L622.5,533.14 L622.97,585.26 L623.44,531.17 L623.91,528.04 L624.38,530.24 L624.85,534.96 L625.32,535.99 L625.79,537.91 L626.26,587.81 L626.73,536.49 L627.2,533.83 L627.67,541.81 L628.14,546.02 L628.61,542.25 L629.08,543.43 L629.55,576.73 L630.02,547.82 L630.49,549.65 L630.96,542.91 L631.43,576.01 L631.9,539.24 L632.37,542.17 L632.84,541.91 L633.31,534.61 L633.78,536.78 L634.25,569.38 L634.72,534.23 L635.19,528.3 L635.66,529.68 L636.13,535 L636.6,541.84 L637.07,546.96 L637.54,578.45 L638.01,557.35 L638.48,548.38 L638.95,544.29 L639.42,548.34 L639.89,538.4 L640.36,575.13 L640.83,534.27 L641.3,532.49 L641.77,542.05 L642.24,533.45 L642.71,580.72 L643.18,535.73 L643.65,534.4 L644.12,538.16 L644.59,533.83 L645.06,587.65 L645.53,534.82 L646,534.02 L646.47,538.14 L646.94,538.38 L647.41,564.75 L647.88,533.8 L648.35,544.22 L648.82,532.55 L649.29,531.41 L649.76,574.67 L650.23,541.74 L650.7,533.6 L651.17,526.98 L651.64,577.95 L652.11,534.5 L652.58,535.65 L653.05,540.43 L653.52,574.46 L653.99,542.94 L654.46,544.78 L654.93,547.06 L655.4,547.13 L655.87,552.07 L656.34,587.92 L656.81,545.28 L657.28,546.61 L657.75,542.23 L658.22,571.6 L658.69,544.4 L659.16,545.88 L659.63,544.58 L660.1,540.83 L660.57,578.42 L661.04,545.56 L661.51,539.82 L661.98,535.23 L662.45,537.01 L662.92,534.75 L663.39,548.05 L663.86,577.02 L664.33,544.82 L664.8,551.23 L665.27,551.93 L665.74,587.74 L666.21,549.64 L666.68,560.05 L667.15,548.03 L667.62,552.13 L668.09,551.9 L668.56,578.11 L669.03,556.49 L669.5,561.23 L669.97,567.81 L670.44,560.48 L670.91,589.3 L671.38,556.12 L671.6,592" fill="none" stroke="#74aa62" stroke-width="1" stroke-linejoin="miter"/>
<rect x="682.2" y="660" width="5.6" height="15.6" rx="2.8" fill="#c7d0d9"/>
<path d="M691.6,675.8 h1.4 v4.9 h-5.3 v-1.4 h3.9 Z" fill="#9aa3ad"/>
<line x1="746" y1="633.5" x2="1400" y2="633.5" stroke="#ebebeb" stroke-width="1"/>
<text x="740.4" y="636.7" font-size="10" text-anchor="end" fill="#585a62" font-weight="400">2 Mil</text>
<line x1="746" y1="595.5" x2="1400" y2="595.5" stroke="#ebebeb" stroke-width="1"/>
<text x="740.4" y="598.92" font-size="10" text-anchor="end" fill="#585a62" font-weight="400">4 Mil</text>
<line x1="746" y1="557.5" x2="1400" y2="557.5" stroke="#ebebeb" stroke-width="1"/>
<text x="740.4" y="561.14" font-size="10" text-anchor="end" fill="#585a62" font-weight="400">6 Mil</text>
<line x1="746" y1="519.5" x2="1400" y2="519.5" stroke="#ebebeb" stroke-width="1"/>
<text x="740.4" y="523.36" font-size="10" text-anchor="end" fill="#585a62" font-weight="400">8 Mil</text>
<line x1="746" y1="482.5" x2="1400" y2="482.5" stroke="#ebebeb" stroke-width="1"/>
<text x="740.4" y="485.58" font-size="10" text-anchor="end" fill="#585a62" font-weight="400">10 Mil</text>
<line x1="746" y1="444.5" x2="1400" y2="444.5" stroke="#ebebeb" stroke-width="1"/>
<text x="740.4" y="447.8" font-size="10" text-anchor="end" fill="#585a62" font-weight="400">12 Mil</text>
<line x1="802.5" y1="444.3" x2="802.5" y2="633.2" stroke="#ebebeb" stroke-width="1"/>
<text x="802.3" y="648.8" font-size="10" text-anchor="middle" fill="#585a62" font-weight="400">3/25</text>
<line x1="907.5" y1="444.3" x2="907.5" y2="633.2" stroke="#ebebeb" stroke-width="1"/>
<text x="907" y="648.8" font-size="10" text-anchor="middle" fill="#585a62" font-weight="400">3/27</text>
<line x1="1011.5" y1="444.3" x2="1011.5" y2="633.2" stroke="#ebebeb" stroke-width="1"/>
<text x="1011.7" y="648.8" font-size="10" text-anchor="middle" fill="#585a62" font-weight="400">3/29</text>
<line x1="1116.5" y1="444.3" x2="1116.5" y2="633.2" stroke="#ebebeb" stroke-width="1"/>
<text x="1116.4" y="648.8" font-size="10" text-anchor="middle" fill="#585a62" font-weight="400">3/31</text>
<line x1="1221.5" y1="444.3" x2="1221.5" y2="633.2" stroke="#ebebeb" stroke-width="1"/>
<text x="1221.1" y="648.8" font-size="10" text-anchor="middle" fill="#585a62" font-weight="400">4/2</text>
<line x1="1325.5" y1="444.3" x2="1325.5" y2="633.2" stroke="#ebebeb" stroke-width="1"/>
<text x="1325.8" y="648.8" font-size="10" text-anchor="middle" fill="#585a62" font-weight="400">4/4</text>
<rect x="754.3" y="476" width="34.7" height="157.2" fill="#7eb26d"/>
<rect x="806.75" y="476.9" width="34.7" height="156.3" fill="#7eb26d"/>
<rect x="859.2" y="471.4" width="34.7" height="161.8" fill="#7eb26d"/>
<rect x="911.65" y="532" width="34.7" height="101.2" fill="#7eb26d"/>
<rect x="964.1" y="524.9" width="34.7" height="108.3" fill="#7eb26d"/>
<rect x="1016.55" y="531" width="34.7" height="102.2" fill="#7eb26d"/>
<rect x="1069" y="524.9" width="34.7" height="108.3" fill="#7eb26d"/>
<rect x="1121.45" y="524" width="34.7" height="109.2" fill="#7eb26d"/>
<rect x="1173.9" y="528.7" width="34.7" height="104.5" fill="#7eb26d"/>
<rect x="1226.35" y="526" width="34.7" height="107.2" fill="#7eb26d"/>
<rect x="1278.8" y="535" width="34.7" height="98.2" fill="#7eb26d"/>
<rect x="1331.25" y="532" width="34.7" height="101.2" fill="#7eb26d"/>
<rect x="1383.7" y="532" width="34.7" height="101.2" fill="#7eb26d"/>
<rect x="722" y="665" width="11" height="3.4" rx="1" fill="#7eb26d"/>
<text x="736.7" y="670" font-size="9.6" text-anchor="start" fill="#585a62" font-weight="400">DNS queries</text>
<circle cx="619.9" cy="416.1" r="3.8" fill="none" stroke="#0083b3" stroke-width="1.3"/><path d="M619.9,414 L619.9,416.6 L618.3,416.7" fill="none" stroke="#0083b3" stroke-width="1"/>
<text x="626.9" y="420.1" font-size="10" fill="#0083b3" stroke="#0083b3" stroke-width="0.15" textLength="60.5" lengthAdjust="spacingAndGlyphs">Last 24 hours</text>
<circle cx="1359.6" cy="416.1" r="3.8" fill="none" stroke="#0083b3" stroke-width="1.3"/><path d="M1359.6,414 L1359.6,416.6 L1358,416.7" fill="none" stroke="#0083b3" stroke-width="1"/>
<text x="1366.6" y="420.1" font-size="10" fill="#0083b3" stroke="#0083b3" stroke-width="0.15" textLength="56" lengthAdjust="spacingAndGlyphs">Last 14 days</text>
<path transform="translate(75.5,12.9)" d="M0,10.7 L-5.1,5.6 C-6.4,4.3 -6,0.4 -3.2,0.4 C-1.6,0.4 -0.6,1.1 0,1.7 C0.6,1.1 1.6,0.4 3.2,0.4 C6,0.4 6.4,4.3 5.1,5.6 Z" fill="none" stroke="rgba(41,156,70,0.62)" stroke-width="0.95"/>
<path transform="translate(75.5,15)" d="M0,7.4 L-3.6,3.6 C-4.6,2.5 -4.3,0 -2.3,0 C-1.1,0 -0.4,0.5 0,1 C0.4,0.5 1.1,0 2.3,0 C4.3,0 4.6,2.5 3.6,3.6 Z" fill="#299c46"/>
<text x="86.4" y="21.8" font-size="12" fill="#1e2028" stroke="#1e2028" stroke-width="0.25" textLength="42.6" lengthAdjust="spacingAndGlyphs">Mainnet</text>
<path transform="translate(485,12.9)" d="M0,10.7 L-5.1,5.6 C-6.4,4.3 -6,0.4 -3.2,0.4 C-1.6,0.4 -0.6,1.1 0,1.7 C0.6,1.1 1.6,0.4 3.2,0.4 C6,0.4 6.4,4.3 5.1,5.6 Z" fill="none" stroke="rgba(41,156,70,0.62)" stroke-width="0.95"/>
<path transform="translate(485,15)" d="M0,7.4 L-3.6,3.6 C-4.6,2.5 -4.3,0 -2.3,0 C-1.1,0 -0.4,0.5 0,1 C0.4,0.5 1.1,0 2.3,0 C4.3,0 4.6,2.5 3.6,3.6 Z" fill="#299c46"/>
<text x="495.9" y="21.8" font-size="12" fill="#1e2028" stroke="#1e2028" stroke-width="0.25" textLength="23.6" lengthAdjust="spacingAndGlyphs">Görli</text>
<path transform="translate(876.5,12.9)" d="M0,10.7 L-5.1,5.6 C-6.4,4.3 -6,0.4 -3.2,0.4 C-1.6,0.4 -0.6,1.1 0,1.7 C0.6,1.1 1.6,0.4 3.2,0.4 C6,0.4 6.4,4.3 5.1,5.6 Z" fill="none" stroke="rgba(41,156,70,0.62)" stroke-width="0.95"/>
<path transform="translate(876.5,15)" d="M0,7.4 L-3.6,3.6 C-4.6,2.5 -4.3,0 -2.3,0 C-1.1,0 -0.4,0.5 0,1 C0.4,0.5 1.1,0 2.3,0 C4.3,0 4.6,2.5 3.6,3.6 Z" fill="#299c46"/>
<text x="887.4" y="21.8" font-size="12" fill="#1e2028" stroke="#1e2028" stroke-width="0.25" textLength="40.6" lengthAdjust="spacingAndGlyphs">Rinkeby</text>
<path transform="translate(1275.35,12.9)" d="M0,10.7 L-5.1,5.6 C-6.4,4.3 -6,0.4 -3.2,0.4 C-1.6,0.4 -0.6,1.1 0,1.7 C0.6,1.1 1.6,0.4 3.2,0.4 C6,0.4 6.4,4.3 5.1,5.6 Z" fill="none" stroke="rgba(41,156,70,0.62)" stroke-width="0.95"/>
<path transform="translate(1275.35,15)" d="M0,7.4 L-3.6,3.6 C-4.6,2.5 -4.3,0 -2.3,0 C-1.1,0 -0.4,0.5 0,1 C0.4,0.5 1.1,0 2.3,0 C4.3,0 4.6,2.5 3.6,3.6 Z" fill="#299c46"/>
<text x="1286.25" y="21.8" font-size="12" fill="#1e2028" stroke="#1e2028" stroke-width="0.25" textLength="42.9" lengthAdjust="spacingAndGlyphs">Ropsten</text>
<text x="86.4" y="385" font-size="15" text-anchor="end" fill="#1e2028" stroke="#1e2028" stroke-width="0.2" textLength="89.6" lengthAdjust="spacingAndGlyphs">(ethdisco.net)</text>
<text x="243.5" y="420.2" font-size="12" fill="#1e2028" stroke="#1e2028" stroke-width="0.25" textLength="112.7" lengthAdjust="spacingAndGlyphs">DNS Queries / minute</text>
<text x="1053" y="420.2" font-size="12" fill="#1e2028" stroke="#1e2028" stroke-width="0.25" textLength="94.7" lengthAdjust="spacingAndGlyphs">DNS Queries / day</text>
</svg>
</body></html>
